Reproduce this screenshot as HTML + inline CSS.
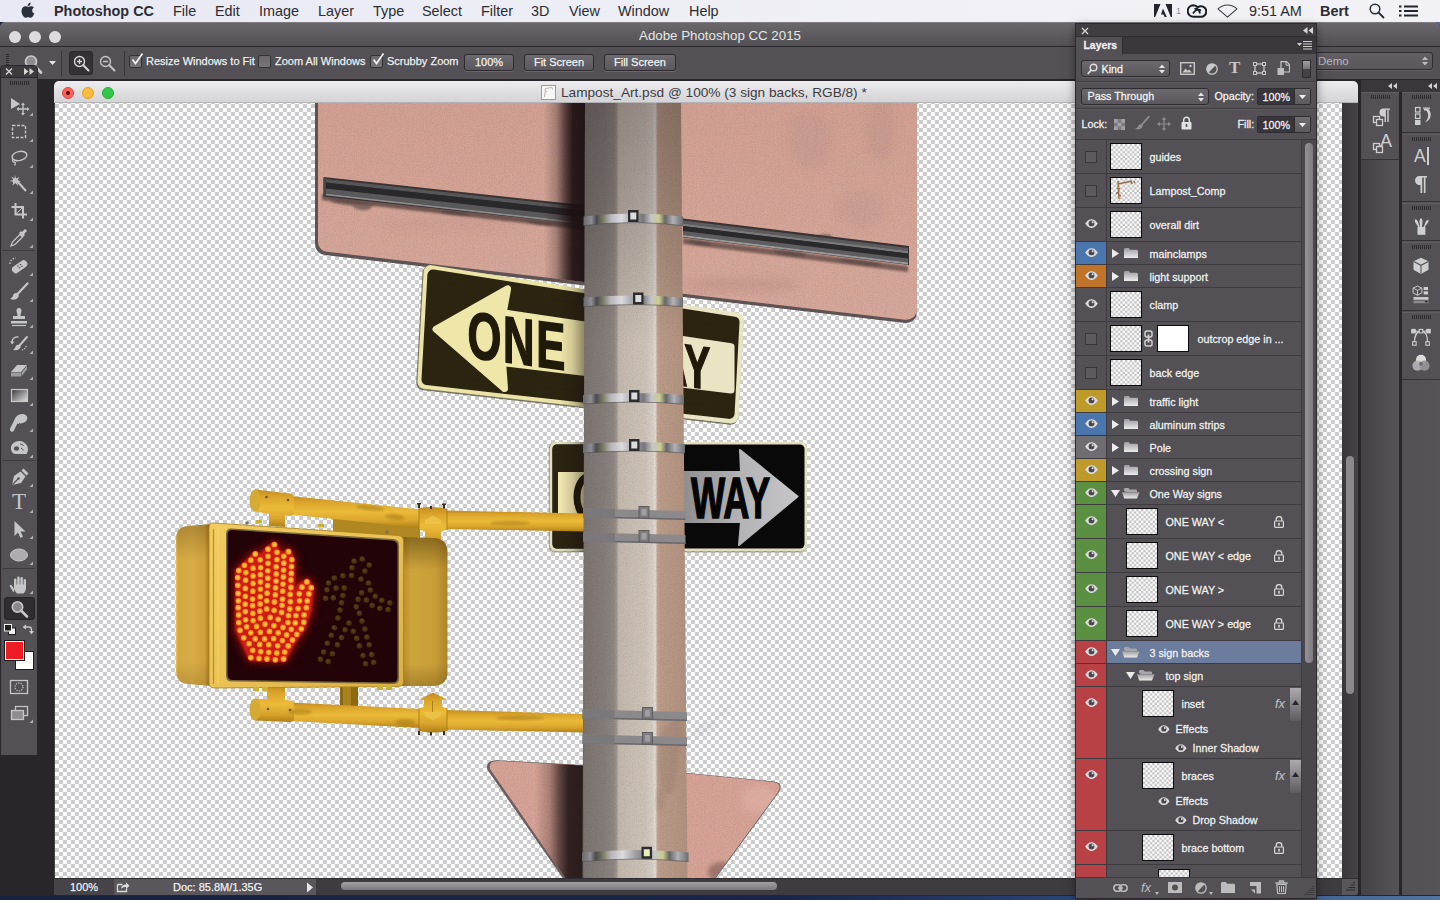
<!DOCTYPE html>
<html lang="en">
<head>
<meta charset="utf-8">
<title>Adobe Photoshop CC 2015</title>
<style>
html,body{margin:0;padding:0}
body{width:1440px;height:900px;overflow:hidden;position:relative;background:linear-gradient(90deg,#17223e 0%,#18264a 55%,#2c4a80 78%,#5373a6 100%);font-family:"Liberation Sans",Arial,sans-serif;font-size:11px;color:#f0f0f0;-webkit-font-smoothing:antialiased}
.abs{position:absolute}
#menubar{left:0;top:0;width:1440px;height:22px;background:linear-gradient(90deg,#e8e9f4,#f0f0f6 60%,#f2f2f6);color:#2c2c32;font-size:14.4px;line-height:22px}
#menubar span{position:absolute;top:0;white-space:nowrap}
#app{left:0;top:22px;width:1440px;height:873.500px;background:#28262a;border-radius:5px 5px 0 0;overflow:hidden}
#apptitle{left:0;top:0;width:1440px;height:24px;background:linear-gradient(#6a686c,#525054);border-top:1px solid #7d7b80;box-sizing:border-box;text-align:center;color:#e6e6e6;font-size:13.300px;line-height:25px}
#optbar{left:0;top:24px;width:1440px;height:33px;background:#535155;border-top:1px solid #2c2a2e;box-sizing:border-box}
.tl{position:absolute;width:12px;height:12px;border-radius:6px}
.btn{position:absolute;height:17px;border:1px solid #2e2c30;border-radius:3px;background:linear-gradient(#6d6b6f,#5a585c);box-sizing:border-box;text-align:center;line-height:15px;font-size:11px;color:#f2f2f2;box-shadow:0 1px 0 rgba(255,255,255,.12);-webkit-text-stroke:.25px rgba(242,242,242,.9)}
.cb{position:absolute;width:13px;height:13px;border:1px solid #343236;border-radius:2px;background:linear-gradient(#6a686c,#77757a);box-sizing:border-box}
.olabel{position:absolute;font-size:11px;line-height:14px;color:#f2f2f2;white-space:nowrap;-webkit-text-stroke:.25px rgba(242,242,242,.9)}
</style>
</head>
<body>
<div id="menubar" class="abs">
<svg class="abs" style="left:20px;top:2px" width="16" height="18" viewBox="0 0 16 18"><path fill="#2a2f3d" d="M11.2 4.3c-1.2 0-2 .7-2.9.7-.9 0-1.700-.7-2.800-.7C3.500 4.300 1.500 6 1.500 9.100c0 3 2.100 6.700 4 6.700.9 0 1.400-.6 2.600-.6 1.200 0 1.500.6 2.600.6 1.600 0 3.100-2.600 3.600-4.200-1.300-.5-2.100-1.700-2.100-3.100 0-1.300.7-2.300 1.700-2.900-.7-.9-1.700-1.300-2.700-1.300zM10.700.600c-.9.100-1.900.7-2.400 1.400-.5.600-.8 1.500-.7 2.300.9 0 1.900-.5 2.400-1.200.5-.7.800-1.600.7-2.500z"/></svg>
<span style="left:54px;font-weight:bold">Photoshop CC</span>
<span style="left:173px">File</span><span style="left:215px">Edit</span><span style="left:259px">Image</span><span style="left:318px">Layer</span><span style="left:373px">Type</span><span style="left:422px">Select</span><span style="left:481px">Filter</span><span style="left:531px">3D</span><span style="left:569px">View</span><span style="left:618px">Window</span><span style="left:689px">Help</span>
<svg class="abs" style="left:1154px;top:4px" width="18" height="14" viewBox="0 0 18 14"><path d="M0 0h6.500L1.200 13H0zM11.500 0H18v13h-1.200zM9 4.500l3.800 8.500H10.500L9.500 10.500H7z" fill="#23262e"/></svg>
<span style="left:1176px;font-size:9px;color:#8a8c96">1</span>
<svg class="abs" style="left:1187px;top:4px" width="20" height="14" viewBox="0 0 20 14"><path d="M6.500 1.200a5.800 5.800 0 000 11.600h7.500a5.300 5.300 0 000-10.600c-1.200 0-2.300.4-3.200 1.100A5.800 5.800 0 006.500 1.200z" fill="none" stroke="#1c1e26" stroke-width="2"/><path d="M6 9.500c2-3.500 5-4.800 8-3M7.500 5C10 4 12.500 6 13 9.500" fill="none" stroke="#1c1e26" stroke-width="1.800"/></svg>
<svg class="abs" style="left:1217px;top:4px" width="21" height="14" viewBox="0 0 21 14"><path d="M1 4.800C6.500-.2 14.500-.2 20 4.800L10.500 13.200z" fill="none" stroke="#3a3d48" stroke-width="1.100" stroke-linejoin="round"/></svg>
<svg class="abs" style="left:1369px;top:3px" width="16" height="16" viewBox="0 0 16 16"><circle cx="6" cy="6" r="4.800" fill="none" stroke="#2a2d38" stroke-width="1.500"/><path d="M9.500 9.500L14.500 14.500" stroke="#2a2d38" stroke-width="1.800" stroke-linecap="round"/></svg>
<svg class="abs" style="left:1399px;top:5px" width="19" height="12" viewBox="0 0 19 12"><path d="M0 1.500h2.500M5 1.500h14M0 6h2.500M5 6h14M0 10.500h2.500M5 10.500h14" stroke="#23262e" stroke-width="2"/></svg>
<span style="left:1249px">9:51 AM</span><span style="left:1320px;font-weight:bold">Bert</span>
</div>
<div id="app" class="abs">
<div id="apptitle" class="abs">Adobe Photoshop CC 2015
<i class="tl" style="left:9px;top:8px;background:#dddbdf"></i><i class="tl" style="left:29px;top:8px;background:#dddbdf"></i><i class="tl" style="left:49px;top:8px;background:#dddbdf"></i>
</div>
<div id="optbar" class="abs">
<div class="abs" style="left:6px;top:7px;width:3px;height:17px;background:repeating-linear-gradient(#2e2c30 0 1px,transparent 1px 2px)"></div>
<svg class="abs" style="left:22px;top:6px" width="22" height="22" viewBox="0 0 22 22"><circle cx="9" cy="8.500" r="5.500" fill="#8f8d91" stroke="#c9c9cb" stroke-width="1.700"/><path d="M13 13l6 6.500" stroke="#c9c9cb" stroke-width="2.800" stroke-linecap="round"/></svg>
<svg class="abs" style="left:49px;top:14px" width="7" height="4" viewBox="0 0 7 4"><path d="M0 0h7L3.500 4z" fill="#e4e4e4"/></svg>
<div class="abs" style="left:61px;top:4px;width:1px;height:25px;background:#3a383c"></div>
<div class="abs" style="left:69px;top:4px;width:24px;height:24px;background:#343236;border:1px solid #2a282c;border-radius:3px;box-sizing:border-box"></div>
<svg class="abs" style="left:73px;top:8px" width="17" height="17" viewBox="0 0 17 17"><circle cx="6.500" cy="6.500" r="5" fill="none" stroke="#d8d8da" stroke-width="1.400"/><path d="M10.300 10.300L15.500 15.500" stroke="#d8d8da" stroke-width="2" stroke-linecap="round"/><path d="M4 6.500h5M6.500 4v5" stroke="#d8d8da" stroke-width="1.300"/></svg>
<svg class="abs" style="left:99px;top:8px" width="17" height="17" viewBox="0 0 17 17"><circle cx="6.500" cy="6.500" r="5" fill="none" stroke="#c4c4c6" stroke-width="1.400"/><path d="M10.300 10.300L15.500 15.500" stroke="#c4c4c6" stroke-width="2" stroke-linecap="round"/><path d="M4 6.500h5" stroke="#c4c4c6" stroke-width="1.300"/></svg>
<div class="abs" style="left:124px;top:4px;width:1px;height:25px;background:#3a383c"></div>
<i class="cb" style="left:129px;top:8px"></i><svg class="abs" style="left:130px;top:5px" width="14" height="14" viewBox="0 0 14 14"><path d="M2.500 7.500L5.500 11.500L12.500 1.500" fill="none" stroke="#f2f2f2" stroke-width="1.700"/></svg><span class="olabel" style="left:146px;top:7px">Resize Windows to Fit</span>
<i class="cb" style="left:258px;top:8px"></i><span class="olabel" style="left:275px;top:7px">Zoom All Windows</span>
<i class="cb" style="left:370px;top:8px"></i><svg class="abs" style="left:371px;top:5px" width="14" height="14" viewBox="0 0 14 14"><path d="M2.500 7.500L5.500 11.500L12.500 1.500" fill="none" stroke="#f2f2f2" stroke-width="1.700"/></svg><span class="olabel" style="left:387px;top:7px">Scrubby Zoom</span>
<div class="btn" style="left:464px;top:7px;width:50px">100%</div>
<div class="btn" style="left:524px;top:7px;width:70px">Fit Screen</div>
<div class="btn" style="left:604px;top:7px;width:72px">Fill Screen</div>
</div>
<!-- document window -->
<div id="doc" class="abs" style="left:54px;top:59px;width:1304px;height:814px;border-radius:5px 5px 0 0;overflow:hidden;background:#434145">
<div class="abs" style="left:0;top:0;width:1304px;height:22px;background:linear-gradient(#ececee,#d4d3d6);border-bottom:1px solid #b4b3b6;box-sizing:border-box;font-size:13px;line-height:23px;color:#3c3c3e">
<i class="tl" style="left:8px;top:6px;background:#fc615d;border:0.5px solid #e0443e;box-sizing:border-box"></i><i class="abs" style="left:12px;top:10px;width:4px;height:4px;border-radius:2px;background:#5c0002"></i>
<i class="tl" style="left:28px;top:6px;background:#fdbc40;border:0.5px solid #dea123;box-sizing:border-box"></i>
<i class="tl" style="left:48px;top:6px;background:#34c84a;border:0.5px solid #27aa35;box-sizing:border-box"></i>
<svg class="abs" style="left:487px;top:4px" width="15" height="15" viewBox="0 0 15 15"><rect x=".5" y=".5" width="14" height="14" fill="#f6f6f6" stroke="#9a9a9c"/><path d="M3.500 12L4.500 3.500L11 2.500M4.500 6l1.500 1M11 2.500l.5 2" stroke="#c0b0a6" stroke-width="1" fill="none"/></svg><span class="abs" style="left:507px;top:0;font-size:13.650px;white-space:nowrap">Lampost_Art.psd @ 100% (3 sign backs, RGB/8) *</span>
</div>
<div id="canvas" class="abs" style="left:1px;top:22px;width:1287px;height:775px;background:repeating-conic-gradient(#fff 0% 25%,#ccccce 0% 50%) 0 1px/8px 8px;overflow:hidden">
<svg class="abs" style="left:0;top:0" width="1287" height="775" viewBox="55 103 1287 775">
<defs>
<filter id="b2" x="-20%" y="-20%" width="140%" height="140%"><feGaussianBlur stdDeviation="2"/></filter>
<filter id="b1" x="-20%" y="-50%" width="140%" height="200%"><feGaussianBlur stdDeviation="1.2"/></filter>
<filter id="b4" x="-30%" y="-30%" width="160%" height="160%"><feGaussianBlur stdDeviation="4"/></filter>
<filter id="b6" x="-30%" y="-30%" width="160%" height="160%"><feGaussianBlur stdDeviation="7"/></filter>
<filter id="grain" x="0" y="0" width="100%" height="100%"><feTurbulence type="fractalNoise" baseFrequency=".9" numOctaves="2" seed="3" result="n"/><feColorMatrix in="n" type="matrix" values="0 0 0 0 0  0 0 0 0 0  0 0 0 0 0  .9 .9 .9 0 -1.15"/><feComposite in2="SourceGraphic" operator="in"/></filter>
<linearGradient id="pole" x1="0" x2="1" y1="0" y2="0"><stop offset="0" stop-color="#6a6360"/><stop offset=".02" stop-color="#7c7571"/><stop offset=".2" stop-color="#857d79"/><stop offset=".3" stop-color="#8f8783"/><stop offset=".325" stop-color="#a0978f"/><stop offset=".345" stop-color="#c5b9ae"/><stop offset=".6" stop-color="#cfc4b9"/><stop offset=".67" stop-color="#d8cfc6"/><stop offset=".692" stop-color="#e4ded8"/><stop offset=".715" stop-color="#c0a490"/><stop offset=".74" stop-color="#bb9c88"/><stop offset="1" stop-color="#b19280"/></linearGradient>
<linearGradient id="poletop" x1="0" x2="0" y1="0" y2="1"><stop offset="0" stop-color="#1a1214" stop-opacity=".3"/><stop offset=".6" stop-color="#1a1214" stop-opacity=".14"/><stop offset="1" stop-color="#1a1214" stop-opacity="0"/></linearGradient>
<linearGradient id="pshadow2" x1="0" x2="1" y1="0" y2="0"><stop offset="0" stop-color="#1a0e10" stop-opacity="0"/><stop offset=".5" stop-color="#1a0e10" stop-opacity=".15"/><stop offset="1" stop-color="#1a0e10" stop-opacity=".5"/></linearGradient>
<linearGradient id="pshadow" x1="0" x2="1" y1="0" y2="0"><stop offset="0" stop-color="#1a0e10" stop-opacity="0"/><stop offset=".3" stop-color="#1a0e10" stop-opacity=".25"/><stop offset=".5" stop-color="#1a0e10" stop-opacity=".66"/><stop offset=".68" stop-color="#1a0e10" stop-opacity=".92"/><stop offset="1" stop-color="#1a0e10" stop-opacity=".96"/></linearGradient>
<linearGradient id="pink" x1="0" x2="0" y1="0" y2="1"><stop offset="0" stop-color="#d2a193"/><stop offset="1" stop-color="#d8a99c"/></linearGradient>
<linearGradient id="band" x1="0" x2="1" y1="0" y2="0"><stop offset="0" stop-color="#6a6a6e"/><stop offset=".08" stop-color="#8e8e92"/><stop offset=".13" stop-color="#4a4b4f"/><stop offset=".2" stop-color="#7e7e64"/><stop offset=".27" stop-color="#b5b5b9"/><stop offset=".38" stop-color="#dcdce0"/><stop offset=".5" stop-color="#a2a2a6"/><stop offset=".6" stop-color="#77777b"/><stop offset=".68" stop-color="#c6c6ca"/><stop offset=".76" stop-color="#cbcb8c"/><stop offset=".82" stop-color="#66666a"/><stop offset=".9" stop-color="#b2b2b6"/><stop offset="1" stop-color="#6c6c70"/></linearGradient>
<linearGradient id="gold" x1="0" x2="0" y1="0" y2="1"><stop offset="0" stop-color="#c48c1c"/><stop offset=".2" stop-color="#dba52c"/><stop offset=".5" stop-color="#ebbb38"/><stop offset=".78" stop-color="#d9a42c"/><stop offset="1" stop-color="#b07e16"/></linearGradient>
<linearGradient id="goldh" x1="0" x2="1" y1="0" y2="0"><stop offset="0" stop-color="#e8c050"/><stop offset=".07" stop-color="#d4a742"/><stop offset=".45" stop-color="#d8ac47"/><stop offset=".8" stop-color="#cfa03c"/><stop offset=".92" stop-color="#a87a22"/><stop offset="1" stop-color="#5e3e0c"/></linearGradient>
<linearGradient id="goldr" x1="0" x2="1" y1="0" y2="0"><stop offset="0" stop-color="#b88c2a"/><stop offset=".2" stop-color="#cda43c"/><stop offset=".7" stop-color="#c99e38"/><stop offset="1" stop-color="#b0862a"/></linearGradient>
<linearGradient id="frame" x1="0" x2="1" y1="0" y2="1"><stop offset="0" stop-color="#f2cc60"/><stop offset=".5" stop-color="#eac256"/><stop offset="1" stop-color="#dcae40"/></linearGradient>
<linearGradient id="topsh" x1="0" x2="0" y1="0" y2="1"><stop offset="0" stop-color="#3a2600" stop-opacity=".45"/><stop offset=".22" stop-color="#3a2600" stop-opacity="0"/><stop offset=".85" stop-color="#3a2600" stop-opacity="0"/><stop offset="1" stop-color="#3a2600" stop-opacity=".25"/></linearGradient>
<linearGradient id="silver" x1="0" x2="1" y1="0" y2="0"><stop offset="0" stop-color="#8e8e90"/><stop offset=".5" stop-color="#b4b4b6"/><stop offset="1" stop-color="#c6c6c8"/></linearGradient>
<radialGradient id="glow" cx=".5" cy=".5" r=".5"><stop offset="0" stop-color="#ff2a10" stop-opacity=".95"/><stop offset=".7" stop-color="#e01808" stop-opacity=".8"/><stop offset="1" stop-color="#a00c04" stop-opacity="0"/></radialGradient>
<linearGradient id="railL" gradientUnits="userSpaceOnUse" x1="0" y1="0" x2="-1.85" y2="16"><stop offset="0" stop-color="#9a9a9c"/><stop offset=".12" stop-color="#2b2b2d"/><stop offset=".42" stop-color="#252527"/><stop offset=".5" stop-color="#6a6a6c"/><stop offset=".82" stop-color="#707072"/><stop offset=".9" stop-color="#b4b4b6"/><stop offset="1" stop-color="#7d7d7f"/></linearGradient>
<clipPath id="topsign"><path d="M318,103 L318,241 Q318,250.500 327,251.800 L903,319.500 Q917,321 917,307 L917,103 Z"/></clipPath>
<clipPath id="cv"><rect x="55" y="103" width="1287" height="775"/></clipPath>
</defs>
<g clip-path="url(#cv)">
<path d="M315,103 L315,243 Q315,253.500 325,255 L903,322.800 Q913,324 916.500,316 L916.500,103 Z" fill="#5e5354"/>
<path d="M318,103 L318,241 Q318,250.500 327,251.800 L903,319.500 Q917,321 917,307 L917,103 Z" fill="url(#pink)"/>
<g clip-path="url(#topsign)">
<g filter="url(#b4)" opacity=".55"><ellipse cx="640" cy="125" rx="18" ry="10" fill="#e2b1a4"/><ellipse cx="810" cy="140" rx="22" ry="28" fill="#c99a90"/><ellipse cx="860" cy="210" rx="25" ry="20" fill="#cb9c92"/><ellipse cx="740" cy="285" rx="60" ry="8" fill="#c49489"/><ellipse cx="450" cy="225" rx="70" ry="7" fill="#cc9c90"/><ellipse cx="880" cy="130" rx="14" ry="30" fill="#c6978d"/></g>
<rect x="315" y="103" width="603" height="225" fill="#fff" filter="url(#grain)" opacity=".1"/>
<polygon points="322,194 585,223 585,230 322,200" fill="#2e2020" opacity=".6" filter="url(#b1)"/>
<g transform="translate(325,178)"><polygon points="-1.500,-1 260,27.300 260,46.500 -1.500,18.500" fill="#3a3234"/><polygon points="0,1 260,29.300 260,33 0,4.500" fill="#565658"/><polygon points="0,4.500 260,33 260,39.500 0,10.500" fill="#29292b"/><polygon points="0,10.500 260,39.500 260,44.500 0,15.500" fill="#59595b"/><polygon points="0,15.500 260,44.500 260,46.500 0,17.300" fill="#8c8c8e"/><rect x="-1.500" y="0" width="2.500" height="17" fill="#47474a"/></g>
<g filter="url(#b1)" opacity=".55" fill="#4a3a3a"><ellipse cx="352" cy="203.500" rx="22" ry="2.600" transform="rotate(6.500 352 203.500)"/><ellipse cx="362" cy="207" rx="9" ry="3" transform="rotate(6.500 362 207)"/><ellipse cx="455" cy="213" rx="14" ry="1.800" transform="rotate(6.500 455 213)"/><ellipse cx="540" cy="223" rx="12" ry="1.800" transform="rotate(6.500 540 223)"/></g>
<polygon points="683,238 908,266 908,272 683,244" fill="#2e2020" opacity=".55" filter="url(#b1)"/>
<g transform="translate(683,219.500)"><polygon points="0,-1 226,26.500 226,45.500 0,18" fill="#3a3234"/><polygon points="0,1 225,28.500 225,31.500 0,4" fill="#5c5c5e"/><polygon points="0,4 225,31.500 225,34 0,6.500" fill="#7a7a7c"/><polygon points="0,6.500 225,34 225,39 0,11.500" fill="#2a2a2c"/><polygon points="0,11.500 225,39 225,43 0,15.500" fill="#5e5e60"/><polygon points="0,15.500 225,43 225,45 0,17.500" fill="#9a9a9c"/></g>
<g filter="url(#b1)" opacity=".5" fill="#4a3a3a"><ellipse cx="790" cy="253" rx="16" ry="2.500" transform="rotate(7 790 253)"/><ellipse cx="825" cy="236" rx="7" ry="2"/><ellipse cx="700" cy="243" rx="12" ry="2" transform="rotate(7 700 243)"/><ellipse cx="860" cy="262" rx="22" ry="2" transform="rotate(7 860 262)"/></g>
<rect x="544" y="103" width="42" height="230" fill="url(#pshadow)"/>
</g>
<path d="M487.500,770 Q484.500,759.300 499,760.300 L583,765 L688,773 L774,781.500 Q784,783 779,792 L713,882 L565.500,882 Z" fill="#6a5e5e"/>
<path d="M490,769 Q487.500,760.300 500,761 L583,765.500 L688,773.500 L773,782 Q783,783.500 778,792 L712,882 L568,882 Z" fill="#d7a497"/>
<clipPath id="tric"><path d="M490,769 Q487.500,760.300 500,761 L583,765.500 L688,773.500 L773,782 Q783,783.500 778,792 L712,882 L568,882 Z"/></clipPath>
<g clip-path="url(#tric)"><rect x="480" y="755" width="310" height="130" fill="#fff" filter="url(#grain)" opacity=".1"/><rect x="535" y="755" width="49" height="130" fill="url(#pshadow)" opacity=".95"/><ellipse cx="722" cy="872" rx="14" ry="10" fill="#6a4a44" opacity=".5" filter="url(#b2)"/><ellipse cx="760" cy="800" rx="20" ry="14" fill="#e4b6aa" opacity=".5" filter="url(#b4)"/></g>
<polygon points="430.6,272.1 736.7,319.9 731.4,416.2 424.4,381.8" fill="#4a4630" opacity=".7" transform="translate(-.7,1)" stroke="#4a4630" stroke-width="15" stroke-linejoin="round"/>
<polygon points="430.6,272.1 736.7,319.9 731.4,416.2 424.4,381.8" fill="#ece3a6" stroke="#ece3a6" stroke-width="14" stroke-linejoin="round"/>
<polygon points="432.9,275.0 734.0,322.1 729.1,413.4 427.0,379.6" fill="#2a2410" stroke="#2a2410" stroke-width="11" stroke-linejoin="round"/>
<clipPath id="ow1"><polygon points="424.0,264.0 744.0,314.0 738.0,424.0 417.0,388.0"/></clipPath>
<polygon points="436,329.200 507.600,288.800 503.200,312.800 731,346.600 731,390 502.600,362.700 504.500,388.500" fill="#efe6a9" stroke="#efe6a9" stroke-width="7" stroke-linejoin="round"/>
<g font-family="'Liberation Sans',Arial,sans-serif" font-weight="bold" fill="#1f1a0a" stroke="#1f1a0a" stroke-width="1.600">
<text transform="matrix(.662 .089 0 1 467.500 357)" font-size="65.800" letter-spacing="2.500">ONE</text>
<text transform="matrix(.64 .085 0 1 625 378)" font-size="60" letter-spacing="1">WAY</text>
</g>
<clipPath id="ow1r"><rect x="683" y="290" width="80" height="150"/></clipPath>
<g clip-path="url(#ow1r)"><polygon points="430.6,272.1 736.7,319.9 731.4,416.2 424.4,381.8" fill="none" stroke="#e9e4c4" stroke-width="14" stroke-linejoin="round"/><polygon points="432.9,275.0 734.0,322.1 729.1,413.4 427.0,379.6" fill="#2a2410" stroke="#2a2410" stroke-width="11" stroke-linejoin="round"/><polygon points="436,329.200 507.600,288.800 503.200,312.800 731,346.600 731,390 502.600,362.700 504.500,388.500" fill="#e9e4c4" stroke="#e9e4c4" stroke-width="7" stroke-linejoin="round"/><text transform="matrix(.64 .085 0 1 625 378)" font-size="60" letter-spacing="1" font-family="'Liberation Sans',Arial,sans-serif" font-weight="bold" fill="#1f1a0a" stroke="#1f1a0a" stroke-width="1.600">WAY</text></g>
<g clip-path="url(#ow1)"><rect x="560" y="260" width="26" height="160" fill="url(#pshadow2)"/></g>
<rect x="549.500" y="441.500" width="257.500" height="110" rx="6" fill="#6d6848" opacity=".5" transform="translate(-.8,1)"/>
<rect x="550" y="442" width="257" height="109" rx="6" fill="#e3dfc0"/>
<rect x="552.500" y="444.500" width="252" height="104" rx="4.500" fill="#090909"/>
<path d="M557,444.500 H640 V548.500 H557 Q552.500,548.500 552.500,544 V449 Q552.500,444.500 557,444.500Z" fill="#2a2410"/>
<rect x="558" y="472" width="60" height="50" fill="#efe6b0"/>
<ellipse cx="590" cy="497" rx="13" ry="21" fill="none" stroke="#1f1a0a" stroke-width="7"/>
<polygon points="684,472 741,472 740,450 797.500,496.500 739,545 741,522 684,522" fill="url(#silver)" stroke="url(#silver)" stroke-width="2" stroke-linejoin="round"/>
<text transform="matrix(.635 0 0 1 691 518)" font-family="'Liberation Sans',Arial,sans-serif" font-weight="bold" font-size="57" fill="#050505" stroke="#050505" stroke-width="1.500">WAY</text>
<rect x="560" y="442" width="26" height="110" fill="url(#pshadow2)"/>
<path d="M333,520 Q334,514 342,514 L420,520 L420,540 L333,532Z" fill="#b08822"/>
<g>
<polygon points="290,496 421,509.500 421,528 290,514.500" fill="url(#gold)"/>
<polygon points="446,510.500 584,513.500 584,531.500 446,529" fill="url(#gold)"/>
<path d="M255,489.500 L290,493.500 Q294,494 294,498 L294,512 Q294,516 290,516 L285,515.500 L285,527 L269,526 L269,514 L255,511.500 Z" fill="url(#gold)"/>
<ellipse cx="255" cy="500.500" rx="5.500" ry="11" fill="#d5ab35"/>
<circle cx="266.500" cy="497" r="1.300" fill="#6e5210"/><circle cx="288" cy="500" r="1.300" fill="#6e5210"/>
<path d="M419,508 Q433,505.500 447,509 L447,530 L441,531 L441,543 Q433,547 425,543 L425,531 L419,530Z" fill="url(#gold)"/>
<path d="M425,520 L433,515.500 L441,520 L441,524 L425,524Z" fill="#edc64e" opacity=".8"/>
<path d="M419,508 L419,530M447,509 L447,530" stroke="#9a7614" stroke-width=".8"/>
<g fill="#3a3020"><rect x="418" y="503.500" width="2" height="4.500"/><rect x="430" y="506" width="2" height="3"/><rect x="443" y="504" width="2" height="4.500"/><rect x="417" y="503" width="4" height="1.500"/><rect x="442" y="503.500" width="4" height="1.500"/></g>
</g>
<g>
<rect x="340" y="686" width="18" height="20" fill="#8d6a12"/><rect x="343" y="686" width="8" height="20" fill="#a98220"/>
<polygon points="290,702.500 421,709 421,728 290,721" fill="url(#gold)"/>
<polygon points="446,710 584,714 584,732.500 446,729.500" fill="url(#gold)"/>
<path d="M267,686 L285,686 L285,700 L290,700.500 Q294,701 294,705 L294,718 Q294,722 290,722 L255,720.500 L255,698.500 L267,699.500Z" fill="url(#gold)"/>
<ellipse cx="255" cy="709.500" rx="5.500" ry="11" fill="#d5ab35"/>
<circle cx="268" cy="709" r="1.300" fill="#6e5210"/><circle cx="290" cy="710" r="1.300" fill="#6e5210"/>
<path d="M419,708 L424,707 L424,700 L419,699.500 L433,692.500 L447,699.500 L442,700 L442,707 L447,708 L447,731 Q433,734 419,731Z" fill="url(#gold)"/>
<path d="M425,716 L433,720.500 L441,716 L441,712 L425,712Z" fill="#edc64e" opacity=".7"/>
<path d="M419,708 L419,731M447,708 L447,731M432.500,701V712" stroke="#9a7614" stroke-width=".8"/>
<g fill="#3a3020"><rect x="418" y="731" width="2" height="4"/><rect x="430" y="732" width="2" height="3.500"/><rect x="443" y="731" width="2" height="4"/></g>
</g>
<g opacity=".35" fill="#8a6408" filter="url(#b1)"><ellipse cx="370" cy="508" rx="14" ry="2.500" transform="rotate(6 370 508)"/><ellipse cx="395" cy="517" rx="10" ry="3" transform="rotate(6 395 517)"/><ellipse cx="510" cy="523" rx="20" ry="2.500"/><ellipse cx="300" cy="712" rx="12" ry="3"/><ellipse cx="520" cy="718" rx="24" ry="2.500"/><ellipse cx="405" cy="722" rx="10" ry="3"/></g>
<polygon points="585,103 681,103 687.500,878 582.500,878" fill="url(#pole)"/>
<clipPath id="polec"><polygon points="585,103 681,103 687.500,878 582.500,878"/></clipPath>
<g clip-path="url(#polec)"><rect x="580" y="103" width="110" height="775" fill="#fff" filter="url(#grain)" opacity=".1"/>
<rect x="580" y="103" width="110" height="240" fill="url(#poletop)"/>
<g filter="url(#b2)" fill="#6a5a52" opacity=".16"><ellipse cx="668" cy="760" rx="10" ry="35"/><ellipse cx="676" cy="735" rx="7" ry="18"/><ellipse cx="660" cy="800" rx="4" ry="12"/></g>
</g>
<g filter="url(#b2)" fill="#8a8080" opacity=".12"><ellipse cx="705" cy="728" rx="14" ry="6" transform="rotate(-30 705 728)"/><ellipse cx="725" cy="712" rx="8" ry="3" transform="rotate(-30 725 712)"/></g>
<path d="M583.5,216.4 Q633.25,210.4 683,216.4 L683,225.6 Q633.25,219.6 583.5,225.6Z" fill="url(#band)"/>
<path d="M583.5,225.6 Q633.25,219.6 683,225.6" fill="none" stroke="#4a4a4c" stroke-width=".8" opacity=".7"/>
<rect x="628" y="210.0" width="10.500" height="12" fill="#2c2c2e"/><rect x="630.3" y="212.5" width="6" height="7" fill="#dcdcde"/>
<path d="M583.5,297.4 Q633.25,293.4 683,297.4 L683,306.6 Q633.25,302.6 583.5,306.6Z" fill="url(#band)"/>
<path d="M583.5,306.6 Q633.25,302.6 683,306.6" fill="none" stroke="#4a4a4c" stroke-width=".8" opacity=".7"/>
<rect x="633" y="292.5" width="10.500" height="12" fill="#2c2c2e"/><rect x="635.3" y="295.0" width="6" height="7" fill="#dcdcde"/>
<path d="M583,394.9 Q633.5,390.9 684,394.9 L684,404.1 Q633.5,400.1 583,404.1Z" fill="url(#band)"/>
<path d="M583,404.1 Q633.5,400.1 684,404.1" fill="none" stroke="#4a4a4c" stroke-width=".8" opacity=".7"/>
<rect x="629" y="390.0" width="10.500" height="12" fill="#2c2c2e"/><rect x="631.3" y="392.5" width="6" height="7" fill="#dcdcde"/>
<path d="M583,443.9 Q634.0,439.9 685,443.9 L685,453.1 Q634.0,449.1 583,453.1Z" fill="url(#band)"/>
<path d="M583,453.1 Q634.0,449.1 685,453.1" fill="none" stroke="#4a4a4c" stroke-width=".8" opacity=".7"/>
<rect x="629" y="439.0" width="10.500" height="12" fill="#2c2c2e"/><rect x="631.3" y="441.5" width="6" height="7" fill="#dcdcde"/>
<path d="M582,852.4 Q635.25,847.4 688.5,852.4 L688.5,861.6 Q635.25,856.6 582,861.6Z" fill="url(#band)"/>
<path d="M582,861.6 Q635.25,856.6 688.5,861.6" fill="none" stroke="#4a4a4c" stroke-width=".8" opacity=".7"/>
<rect x="641.5" y="846.75" width="10.500" height="12" fill="#2c2c2e"/><rect x="643.8" y="849.25" width="6" height="7" fill="#e9efb8"/>
<polygon points="583,508.5 685.5,511.0 685.5,520.0 583,517.5" fill="#8b898b"/>
<polygon points="583,516.0 685.5,518.5 685.5,520.0 583,517.5" fill="#6a686a"/>
<polygon points="583,508.5 615,509.3 615,518.3 583,517.5" fill="#7a787a"/>
<rect x="639" y="506.5" width="10" height="11.500" fill="#7e7c7e" stroke="#5e5c5e" stroke-width="1"/><rect x="641.5" y="509" width="5" height="6.500" fill="#a09ea0"/>
<polygon points="583,532.5 685.5,535.0 685.5,544.0 583,541.5" fill="#8b898b"/>
<polygon points="583,540.0 685.5,542.5 685.5,544.0 583,541.5" fill="#6a686a"/>
<polygon points="583,532.5 615,533.3 615,542.3 583,541.5" fill="#7a787a"/>
<rect x="639" y="530.5" width="10" height="11.500" fill="#7e7c7e" stroke="#5e5c5e" stroke-width="1"/><rect x="641.5" y="533" width="5" height="6.500" fill="#a09ea0"/>
<polygon points="582.5,709.5 687,712.0 687,721.0 582.5,718.5" fill="#8b898b"/>
<polygon points="582.5,717.0 687,719.5 687,721.0 582.5,718.5" fill="#6a686a"/>
<polygon points="582.5,709.5 614.5,710.3 614.5,719.3 582.5,718.5" fill="#7a787a"/>
<rect x="642.5" y="707.5" width="10" height="11.500" fill="#7e7c7e" stroke="#5e5c5e" stroke-width="1"/><rect x="645.0" y="710" width="5" height="6.500" fill="#a09ea0"/>
<polygon points="582.5,734.5 687,737.0 687,746.0 582.5,743.5" fill="#8b898b"/>
<polygon points="582.5,742.0 687,744.5 687,746.0 582.5,743.5" fill="#6a686a"/>
<polygon points="582.5,734.5 614.5,735.3 614.5,744.3 582.5,743.5" fill="#7a787a"/>
<rect x="642.5" y="732.5" width="10" height="11.500" fill="#7e7c7e" stroke="#5e5c5e" stroke-width="1"/><rect x="645.0" y="735" width="5" height="6.500" fill="#a09ea0"/>
<g>
<path d="M188,526 L212,524 L212,686 L188,684 Q176,683 176,671 L176,539 Q176,527 188,526Z" fill="url(#goldh)"/>
<path d="M402,537 L434,538 Q447.500,539 447.500,552 L447.500,672 Q447.500,685 434,686 L402,686Z" fill="url(#goldr)"/>
<path d="M402,537 L434,538 Q447.500,539 447.500,552 L447.500,672 Q447.500,685 434,686 L402,686Z" fill="url(#topsh)"/>
<path d="M188,526 L212,524 L212,686 L188,684 Q176,683 176,671 L176,539 Q176,527 188,526Z" fill="url(#topsh)" opacity=".6"/>
<path d="M209,527 Q209,522.500 214,523 L398,535.500 Q403.500,536 403.500,541 L403.500,682 Q403.500,686.500 398,686.500 L214,688 Q209,688 209,683Z" fill="url(#frame)"/>
<path d="M213.500,529 L213.500,684" stroke="#b8901e" stroke-width="1.200" fill="none"/><path d="M218,527 L218,685" stroke="#f3d462" stroke-width="1" fill="none" opacity=".8"/>
<path d="M209,527 Q209,522.500 214,523 L398,535.500 Q403.500,536 403.500,541 L403.500,682 Q403.500,686.500 398,686.500 L214,688 Q209,688 209,683Z" fill="none" stroke="#a8821a" stroke-width=".8"/>
<path d="M226,534 Q226,528 232,528.500 L393,539 Q399,539.500 399,545 L399,679 Q399,684 393,684 L232,681.500 Q226,681.500 226,676Z" fill="#7a6a3a"/>
<path d="M227.500,535 Q227.500,529.500 233,530 L392,540.500 Q397.500,541 397.500,546 L397.500,678 Q397.500,682.500 392,682.500 L233,680 Q227.500,680 227.500,675Z" fill="#220308"/>
<g fill="#c9b23a"><rect x="253" y="687" width="6" height="4"/><rect x="262" y="687" width="6" height="4"/><rect x="377" y="686" width="6" height="4"/><rect x="386" y="686" width="6" height="4"/><rect x="256" y="520" width="6" height="3.500"/><rect x="318" y="524" width="6" height="3.500"/></g>
<g fill="#777060"><circle cx="247" cy="523" r="1.800"/><circle cx="387" cy="532" r="1.800"/></g>
</g>
<polygon points="238.0,571.0 238.0,630.0 251.0,658.0 284.0,659.0 294.0,640.0 303.0,628.0 309.0,610.0 311.5,588.0 307.0,581.5 300.0,586.0 297.0,594.0 292.0,596.0 292.0,560.0 288.5,551.5 283.0,556.0 277.0,551.0 274.5,544.5 268.0,549.0 261.0,557.0 255.5,554.0 250.0,560.0 244.5,565.0" fill="#c81410" stroke="#c81410" stroke-width="9" stroke-linejoin="round" filter="url(#b4)" opacity=".6"/>
<polygon points="238.0,571.0 238.0,630.0 251.0,658.0 284.0,659.0 294.0,640.0 303.0,628.0 309.0,610.0 311.5,588.0 307.0,581.5 300.0,586.0 297.0,594.0 292.0,596.0 292.0,560.0 288.5,551.5 283.0,556.0 277.0,551.0 274.5,544.5 268.0,549.0 261.0,557.0 255.5,554.0 250.0,560.0 244.5,565.0" fill="#cc1a12" stroke="#cc1a12" stroke-width="5.500" stroke-linejoin="round" filter="url(#b1)"/>
<path d="M274.4,544.6h0M268.0,549.2h0M255.3,554.0h0M277.0,552.3h0M288.5,551.7h0M268.0,556.3h0M283.8,556.3h0M250.9,560.2h0M260.2,559.8h0M277.0,559.6h0M291.8,559.6h0M268.0,563.3h0M283.8,563.2h0M244.5,565.3h0M253.1,568.2h0M260.7,567.6h0M276.2,566.8h0M291.5,566.6h0M238.8,570.6h0M267.8,570.8h0M283.6,570.1h0M245.9,572.6h0M260.4,574.7h0M276.2,574.0h0M291.3,573.4h0M237.7,577.6h0M253.1,576.0h0M267.8,578.2h0M283.4,577.0h0M245.6,580.2h0M260.4,582.0h0M276.1,581.1h0M290.9,580.0h0M237.9,585.3h0M253.1,583.5h0M267.6,585.7h0M283.0,584.1h0M306.9,581.9h0M245.4,588.5h0M260.4,589.1h0M275.6,587.9h0M290.9,587.5h0M302.0,587.2h0M311.2,587.7h0M238.1,593.4h0M252.9,591.2h0M267.1,593.2h0M282.7,591.2h0M299.3,593.8h0M308.9,593.9h0M245.4,596.3h0M260.2,596.7h0M275.3,594.9h0M290.2,594.5h0M238.4,600.8h0M252.6,599.1h0M266.7,600.8h0M282.5,599.1h0M290.4,601.7h0M299.6,600.8h0M307.2,600.9h0M245.2,604.2h0M260.2,604.0h0M274.4,602.0h0M282.1,605.3h0M238.2,607.7h0M252.6,605.7h0M266.7,608.9h0M289.8,609.0h0M298.1,608.6h0M306.3,607.7h0M245.4,611.6h0M259.9,611.2h0M274.2,610.3h0M281.6,612.5h0M238.7,615.0h0M252.9,613.4h0M270.2,617.4h0M288.5,615.6h0M295.9,615.6h0M304.1,614.9h0M245.6,619.8h0M260.4,618.2h0M278.2,619.3h0M288.0,622.6h0M295.3,622.9h0M303.7,622.2h0M238.8,622.6h0M253.1,620.6h0M265.0,624.2h0M273.9,625.7h0M246.7,626.8h0M256.6,626.5h0M283.0,627.5h0M291.3,629.3h0M301.2,628.8h0M240.1,630.3h0M250.8,632.8h0M260.4,632.3h0M269.5,631.4h0M278.2,632.8h0M286.6,634.9h0M296.8,634.3h0M243.8,637.8h0M255.2,638.9h0M264.6,638.9h0M273.7,638.7h0M282.4,640.6h0M292.5,640.0h0M249.1,643.7h0M259.7,644.4h0M268.7,644.7h0M277.7,645.8h0M288.2,645.9h0M252.7,650.3h0M260.8,651.6h0M268.7,652.3h0M276.8,653.0h0M284.7,652.1h0M250.8,657.6h0M259.0,658.5h0M266.9,659.0h0M275.3,659.8h0M283.6,659.0h0" stroke="#ff861a" stroke-width="5.800" stroke-linecap="round" fill="none"/>
<path d="M274.4,544.6h0M268.0,549.2h0M255.3,554.0h0M277.0,552.3h0M288.5,551.7h0M268.0,556.3h0M283.8,556.3h0M250.9,560.2h0M260.2,559.8h0M277.0,559.6h0M291.8,559.6h0M268.0,563.3h0M283.8,563.2h0M244.5,565.3h0M253.1,568.2h0M260.7,567.6h0M276.2,566.8h0M291.5,566.6h0M238.8,570.6h0M267.8,570.8h0M283.6,570.1h0M245.9,572.6h0M260.4,574.7h0M276.2,574.0h0M291.3,573.4h0M237.7,577.6h0M253.1,576.0h0M267.8,578.2h0M283.4,577.0h0M245.6,580.2h0M260.4,582.0h0M276.1,581.1h0M290.9,580.0h0M237.9,585.3h0M253.1,583.5h0M267.6,585.7h0M283.0,584.1h0M306.9,581.9h0M245.4,588.5h0M260.4,589.1h0M275.6,587.9h0M290.9,587.5h0M302.0,587.2h0M311.2,587.7h0M238.1,593.4h0M252.9,591.2h0M267.1,593.2h0M282.7,591.2h0M299.3,593.8h0M308.9,593.9h0M245.4,596.3h0M260.2,596.7h0M275.3,594.9h0M290.2,594.5h0M238.4,600.8h0M252.6,599.1h0M266.7,600.8h0M282.5,599.1h0M290.4,601.7h0M299.6,600.8h0M307.2,600.9h0M245.2,604.2h0M260.2,604.0h0M274.4,602.0h0M282.1,605.3h0M238.2,607.7h0M252.6,605.7h0M266.7,608.9h0M289.8,609.0h0M298.1,608.6h0M306.3,607.7h0M245.4,611.6h0M259.9,611.2h0M274.2,610.3h0M281.6,612.5h0M238.7,615.0h0M252.9,613.4h0M270.2,617.4h0M288.5,615.6h0M295.9,615.6h0M304.1,614.9h0M245.6,619.8h0M260.4,618.2h0M278.2,619.3h0M288.0,622.6h0M295.3,622.9h0M303.7,622.2h0M238.8,622.6h0M253.1,620.6h0M265.0,624.2h0M273.9,625.7h0M246.7,626.8h0M256.6,626.5h0M283.0,627.5h0M291.3,629.3h0M301.2,628.8h0M240.1,630.3h0M250.8,632.8h0M260.4,632.3h0M269.5,631.4h0M278.2,632.8h0M286.6,634.9h0M296.8,634.3h0M243.8,637.8h0M255.2,638.9h0M264.6,638.9h0M273.7,638.7h0M282.4,640.6h0M292.5,640.0h0M249.1,643.7h0M259.7,644.4h0M268.7,644.7h0M277.7,645.8h0M288.2,645.9h0M252.7,650.3h0M260.8,651.6h0M268.7,652.3h0M276.8,653.0h0M284.7,652.1h0M250.8,657.6h0M259.0,658.5h0M266.9,659.0h0M275.3,659.8h0M283.6,659.0h0" stroke="#ffa828" stroke-width="4.200" stroke-linecap="round" fill="none"/>
<path d="M274.4,544.6h0M268.0,549.2h0M255.3,554.0h0M277.0,552.3h0M288.5,551.7h0M268.0,556.3h0M283.8,556.3h0M250.9,560.2h0M260.2,559.8h0M277.0,559.6h0M291.8,559.6h0M268.0,563.3h0M283.8,563.2h0M244.5,565.3h0M253.1,568.2h0M260.7,567.6h0M276.2,566.8h0M291.5,566.6h0M238.8,570.6h0M267.8,570.8h0M283.6,570.1h0M245.9,572.6h0M260.4,574.7h0M276.2,574.0h0M291.3,573.4h0M237.7,577.6h0M253.1,576.0h0M267.8,578.2h0M283.4,577.0h0M245.6,580.2h0M260.4,582.0h0M276.1,581.1h0M290.9,580.0h0M237.9,585.3h0M253.1,583.5h0M267.6,585.7h0M283.0,584.1h0M306.9,581.9h0M245.4,588.5h0M260.4,589.1h0M275.6,587.9h0M290.9,587.5h0M302.0,587.2h0M311.2,587.7h0M238.1,593.4h0M252.9,591.2h0M267.1,593.2h0M282.7,591.2h0M299.3,593.8h0M308.9,593.9h0M245.4,596.3h0M260.2,596.7h0M275.3,594.9h0M290.2,594.5h0M238.4,600.8h0M252.6,599.1h0M266.7,600.8h0M282.5,599.1h0M290.4,601.7h0M299.6,600.8h0M307.2,600.9h0M245.2,604.2h0M260.2,604.0h0M274.4,602.0h0M282.1,605.3h0M238.2,607.7h0M252.6,605.7h0M266.7,608.9h0M289.8,609.0h0M298.1,608.6h0M306.3,607.7h0M245.4,611.6h0M259.9,611.2h0M274.2,610.3h0M281.6,612.5h0M238.7,615.0h0M252.9,613.4h0M270.2,617.4h0M288.5,615.6h0M295.9,615.6h0M304.1,614.9h0M245.6,619.8h0M260.4,618.2h0M278.2,619.3h0M288.0,622.6h0M295.3,622.9h0M303.7,622.2h0M238.8,622.6h0M253.1,620.6h0M265.0,624.2h0M273.9,625.7h0M246.7,626.8h0M256.6,626.5h0M283.0,627.5h0M291.3,629.3h0M301.2,628.8h0M240.1,630.3h0M250.8,632.8h0M260.4,632.3h0M269.5,631.4h0M278.2,632.8h0M286.6,634.9h0M296.8,634.3h0M243.8,637.8h0M255.2,638.9h0M264.6,638.9h0M273.7,638.7h0M282.4,640.6h0M292.5,640.0h0M249.1,643.7h0M259.7,644.4h0M268.7,644.7h0M277.7,645.8h0M288.2,645.9h0M252.7,650.3h0M260.8,651.6h0M268.7,652.3h0M276.8,653.0h0M284.7,652.1h0M250.8,657.6h0M259.0,658.5h0M266.9,659.0h0M275.3,659.8h0M283.6,659.0h0" stroke="#ffd046" stroke-width="2.600" stroke-linecap="round" fill="none"/>
<path d="M354.1,560.9h0M362.3,559.0h0M369.2,564.9h0M351.9,567.7h0M364.9,571.0h0M351.5,575.6h0M334.3,577.9h0M342.9,575.8h0M361.0,579.0h0M328.5,582.9h0M368.5,582.9h0M326.9,589.8h0M336.0,587.9h0M344.2,587.9h0M370.3,590.1h0M361.6,592.7h0M325.6,598.2h0M333.4,597.7h0M342.9,595.6h0M375.3,596.3h0M358.1,599.2h0M366.4,599.9h0M341.5,602.8h0M381.8,600.3h0M389.8,602.8h0M372.1,605.4h0M356.2,606.8h0M379.7,608.2h0M388.0,609.6h0M340.1,610.0h0M359.4,613.2h0M337.9,618.0h0M362.0,620.9h0M349.0,623.0h0M334.3,627.8h0M345.1,629.8h0M353.4,631.3h0M364.9,629.1h0M331.2,635.3h0M341.5,637.5h0M356.7,638.2h0M366.8,637.1h0M327.3,643.3h0M337.5,644.7h0M359.4,645.7h0M369.2,644.7h0M323.7,651.9h0M332.4,653.7h0M363.0,655.5h0M371.7,654.4h0M320.5,659.2h0M328.1,661.6h0M365.6,663.8h0M373.6,662.3h0" stroke="#49330f" stroke-width="5.500" stroke-linecap="round" fill="none"/>
<path d="M354.1,560.9h0M362.3,559.0h0M369.2,564.9h0M351.9,567.7h0M364.9,571.0h0M351.5,575.6h0M334.3,577.9h0M342.9,575.8h0M361.0,579.0h0M328.5,582.9h0M368.5,582.9h0M326.9,589.8h0M336.0,587.9h0M344.2,587.9h0M370.3,590.1h0M361.6,592.7h0M325.6,598.2h0M333.4,597.7h0M342.9,595.6h0M375.3,596.3h0M358.1,599.2h0M366.4,599.9h0M341.5,602.8h0M381.8,600.3h0M389.8,602.8h0M372.1,605.4h0M356.2,606.8h0M379.7,608.2h0M388.0,609.6h0M340.1,610.0h0M359.4,613.2h0M337.9,618.0h0M362.0,620.9h0M349.0,623.0h0M334.3,627.8h0M345.1,629.8h0M353.4,631.3h0M364.9,629.1h0M331.2,635.3h0M341.5,637.5h0M356.7,638.2h0M366.8,637.1h0M327.3,643.3h0M337.5,644.7h0M359.4,645.7h0M369.2,644.7h0M323.7,651.9h0M332.4,653.7h0M363.0,655.5h0M371.7,654.4h0M320.5,659.2h0M328.1,661.6h0M365.6,663.8h0M373.6,662.3h0" stroke="#5a4218" stroke-width="2.500" stroke-linecap="round" fill="none" transform="translate(-.5,-.6)"/>
</g></svg>

</div>
<!-- v scrollbar -->
<div class="abs" style="left:1288px;top:22px;width:16px;height:776px;background:linear-gradient(90deg,#39373b,#464448);box-sizing:border-box"></div>
<div class="abs" style="left:1292px;top:375px;width:8px;height:238px;border-radius:4px;background:#8b898d"></div>
<!-- status bar -->
<div class="abs" style="left:0;top:797px;width:1304px;height:17px;background:#3e3c40;border-top:1px solid #2e2c30;box-sizing:border-box"></div>
<div class="abs" style="left:0;top:798px;width:60px;height:16px;background:#464448;border-radius:0 0 0 4px"></div>
<div class="abs" style="left:60px;top:798px;width:202px;height:16px;background:#59575b"></div>
<span class="olabel" style="left:16px;top:799px">100%</span>
<svg class="abs" style="left:62px;top:800px" width="14" height="12" viewBox="0 0 14 12"><path d="M1.500 3.500h5M1.500 3.500v7h9v-3" fill="none" stroke="#dcdcdc" stroke-width="1.300"/><path d="M5 8c0-3 2-4.500 5-4.500V1.500l3.500 3.200L10 8V6C8 6 6 6.500 5 8z" fill="#dcdcdc"/></svg>
<span class="olabel" style="left:119px;top:799px">Doc: 85.8M/1.35G</span>
<svg class="abs" style="left:252px;top:801px" width="8" height="11" viewBox="0 0 8 11"><path d="M1 .5l6 5-6 5z" fill="#e8e8e8"/></svg>
<div class="abs" style="left:287px;top:801px;width:436px;height:8px;border-radius:4px;background:linear-gradient(#a3a1a5,#7b797d)"></div>
<div class="abs" style="left:1288px;top:798px;width:16px;height:16px;background:#59575b;border-radius:0 0 4px 0"></div><svg class="abs" style="left:1291px;top:800px" width="11" height="11" viewBox="0 0 11 11"><path d="M8 1.500h2M6 4h4M3.500 6.500h6.500M1 9h9" stroke="#2c2a2e" stroke-width="1"/></svg>
</div>
</div><!-- /app -->
<div class="dd abs" style="left:1310px;top:52px;width:123px;height:18px;background:linear-gradient(#626064,#59575b)"></div>
<span class="olabel" style="left:1318px;top:54px;color:#b9b7bb;font-size:11.500px;-webkit-text-stroke:0">Demo</span>
<svg class="abs" style="left:1422px;top:56px" width="6" height="10" viewBox="0 0 6 10"><path d="M0 4l3-3.500L6 4zM0 6l3 3.500L6 6z" fill="#bdbbbf"/></svg>
<div id="dock" class="abs" style="left:1361px;top:80px;width:79px;height:816px;background:#28262a">
<div class="abs" style="left:0;top:0;width:79px;height:12px;background:#39373b"></div>
<svg class="abs" style="left:27px;top:3px" width="9" height="6" viewBox="0 0 9 6"><path d="M4 0v6L0 3zM9 0v6L5 3z" fill="#d2d2d2"/></svg>
<svg class="abs" style="left:67px;top:3px" width="9" height="6" viewBox="0 0 9 6"><path d="M4 0v6L0 3zM9 0v6L5 3z" fill="#d2d2d2"/></svg>
<div class="abs" style="left:0;top:12px;width:38px;height:803px;background:linear-gradient(90deg,#444246,#555357)"></div>
<div class="abs" style="left:41px;top:12px;width:38px;height:803px;background:linear-gradient(90deg,#525054,#565458)"></div>
<div class="abs" style="left:0px;top:12px;width:38px;height:68px;background:#535155;border-bottom:1px solid #353337;box-shadow:0 1px 0 #605e62 inset;box-sizing:border-box"></div>
<div class="abs" style="left:10px;top:15px;width:20px;height:4px;background:repeating-linear-gradient(90deg,#2e2c30 0 1px,transparent 1px 2px)"></div>
<div class="abs" style="left:41px;top:12px;width:38px;height:41px;background:#535155;border-bottom:1px solid #353337;box-shadow:0 1px 0 #605e62 inset;box-sizing:border-box"></div>
<div class="abs" style="left:51px;top:15px;width:20px;height:4px;background:repeating-linear-gradient(90deg,#2e2c30 0 1px,transparent 1px 2px)"></div>
<div class="abs" style="left:41px;top:54px;width:38px;height:68px;background:#535155;border-bottom:1px solid #353337;box-shadow:0 1px 0 #605e62 inset;box-sizing:border-box"></div>
<div class="abs" style="left:51px;top:57px;width:20px;height:4px;background:repeating-linear-gradient(90deg,#2e2c30 0 1px,transparent 1px 2px)"></div>
<div class="abs" style="left:41px;top:123px;width:38px;height:38px;background:#535155;border-bottom:1px solid #353337;box-shadow:0 1px 0 #605e62 inset;box-sizing:border-box"></div>
<div class="abs" style="left:51px;top:126px;width:20px;height:4px;background:repeating-linear-gradient(90deg,#2e2c30 0 1px,transparent 1px 2px)"></div>
<div class="abs" style="left:41px;top:162px;width:38px;height:69px;background:#535155;border-bottom:1px solid #353337;box-shadow:0 1px 0 #605e62 inset;box-sizing:border-box"></div>
<div class="abs" style="left:51px;top:165px;width:20px;height:4px;background:repeating-linear-gradient(90deg,#2e2c30 0 1px,transparent 1px 2px)"></div>
<div class="abs" style="left:41px;top:232px;width:38px;height:68px;background:#535155;border-bottom:1px solid #353337;box-shadow:0 1px 0 #605e62 inset;box-sizing:border-box"></div>
<div class="abs" style="left:51px;top:235px;width:20px;height:4px;background:repeating-linear-gradient(90deg,#2e2c30 0 1px,transparent 1px 2px)"></div>
<svg class="abs" style="left:9px;top:24px" width="24" height="24" viewBox="0 0 24 24"><rect x="3.500" y="12.500" width="6" height="6" stroke="#cfcfd1" fill="none" stroke-width="1.300"/><rect x="6.500" y="15.500" width="6" height="6" fill="#535155" stroke="#cfcfd1" stroke-width="1.300"/><path d="M9.500 8.500A4 4 0 0113.500 4.500H20v1.300h-1.300V18h-1.400V5.800h-1.400V18h-1.400V12.500h-1A4 4 0 019.500 8.500z" fill="#cfcfd1"/></svg>
<span class="abs" style="left:19px;top:52px;font-size:18px;line-height:18px;color:#cfcfd1">A</span>
<svg class="abs" style="left:9px;top:51px" width="24" height="24" viewBox="0 0 24 24"><rect x="3.500" y="12.500" width="6" height="6" stroke="#cfcfd1" fill="none" stroke-width="1.300"/><rect x="6.500" y="15.500" width="6" height="6" fill="#535155" stroke="#cfcfd1" stroke-width="1.300"/></svg>
<svg class="abs" style="left:50px;top:23px" width="24" height="24" viewBox="0 0 24 24"><rect x="4.500" y="4.500" width="4.500" height="4.500" stroke="#cfcfd1" fill="none" stroke-width="1.200"/><rect x="4.500" y="11" width="4.500" height="4.500" stroke="#cfcfd1" fill="none" stroke-width="1.200"/><rect x="4" y="17" width="5.500" height="5" fill="#cfcfd1"/><path d="M13 6h4.500c2.500 2.500 3 7 1 10-1 1.500-2.500 2.500-4.500 3 2.500-2 3.500-5 3-8-.3-1.500-1-2.800-2-3.500L13 7.500z" fill="#cfcfd1"/><path d="M12 4.500h7v1.300h-7z" fill="#cfcfd1"/></svg>
<span class="abs" style="left:53px;top:67px;font-size:17.500px;line-height:18px;color:#cfcfd1">A</span>
<div class="abs" style="left:66px;top:67px;width:1.500px;height:18px;background:#cfcfd1"></div>
<svg class="abs" style="left:48px;top:92px" width="24" height="24" viewBox="0 0 24 24"><path d="M6 8.500A4.500 4.500 0 0110.500 4H18v1.500h-1.500V21h-1.700V5.500h-1.600V21h-1.700V13h-1A4.500 4.500 0 016 8.500z" fill="#cfcfd1"/></svg>
<svg class="abs" style="left:48px;top:134px" width="24" height="24" viewBox="0 0 24 24"><g transform="translate(1.44,1.44) scale(0.88)"><rect x="8" y="13" width="9" height="9" fill="#cfcfd1"/><path d="M11 13l-.8-6c0-2 1.200-3.500 1.800-4.500.6 1 1.800 2.500 1.800 4.500L13 13zM9 13L5.500 8c-.8-1.500-.3-3 .2-4 1 .5 2.300 1.500 2.800 3L10.500 13zM15 13l2.500-6c.7-1.200 2-2 3-2 .2 1 0 2.500-.8 3.700L16 13z" fill="#cfcfd1"/></g></svg>
<svg class="abs" style="left:48px;top:174px" width="24" height="24" viewBox="0 0 24 24"><g transform="translate(1.44,1.44) scale(0.88)"><path d="M12 2.500l8.500 4.200v9.600L12 21l-8.500-4.700V6.700z" fill="#cfcfd1"/><path d="M3.800 6.900L12 11.200l8.200-4.300M12 11.200V20.500" stroke="#535155" stroke-width="1.200" fill="none"/></g></svg>
<svg class="abs" style="left:48px;top:202px" width="24" height="24" viewBox="0 0 24 24"><g transform="translate(1.44,1.44) scale(0.88)"><path d="M8 3l5 2.300v5.400L8 13.500 3 10.700V5.300z" stroke="#cfcfd1" fill="none" stroke-width="1.100"/><path d="M3.200 5.400L8 7.800l4.800-2.400M8 7.800v5.400" stroke="#cfcfd1" fill="none" stroke-width="1"/><rect x="15" y="4" width="5" height="3.500" fill="#cfcfd1"/><rect x="15" y="9" width="5" height="3.500" fill="#cfcfd1"/><rect x="3.500" y="15.500" width="17" height="3" fill="#cfcfd1"/><rect x="3.500" y="19.500" width="17" height="3" fill="#8d8b8f"/><path d="M16 20l2 2.200 2-2.200z" fill="#2a282c"/></g></svg>
<svg class="abs" style="left:48px;top:244px" width="24" height="24" viewBox="0 0 24 24"><g transform="translate(1.44,1.44) scale(0.88)"><path d="M4.500 20.500c0-9 3-14 7.500-14s7.500 5 7.500 14" stroke="#cfcfd1" fill="none" stroke-width="1.300"/><path d="M3 6.500h18" stroke="#cfcfd1" stroke-width="1.200"/><g fill="#535155" stroke="#cfcfd1" stroke-width="1.200"><rect x="1.500" y="4.500" width="4" height="4" fill="#cfcfd1"/><rect x="18.500" y="4.500" width="4" height="4" fill="#cfcfd1"/><rect x="2.500" y="18.500" width="4" height="4"/><rect x="17.500" y="18.500" width="4" height="4"/><rect x="10" y="4.500" width="4" height="4"/></g></g></svg>
<svg class="abs" style="left:48px;top:271px" width="24" height="24" viewBox="0 0 24 24"><g transform="translate(1.44,1.44) scale(0.88)"><circle cx="12" cy="8.500" r="5.800" fill="#dcdcdc"/><circle cx="8" cy="15" r="5.800" fill="#b4b2b6" fill-opacity=".9"/><circle cx="16" cy="15" r="5.800" fill="#98969a" fill-opacity=".9"/><circle cx="12" cy="12.800" r="2.200" fill="#6e6c70"/></g></svg>
</div>
<style>
#lp{left:1076px;top:24px;width:240px;height:874px;background:#535155;box-shadow:0 0 0 1px #2b292d,0 3px 10px rgba(0,0,0,.5);overflow:hidden;font-size:11px;color:#f1f1f1}
#lp .row{position:absolute;left:0;width:225px;box-sizing:border-box;border-bottom:1px solid #3d3b3f}
#lp .eyec{position:absolute;left:0;top:0;bottom:0;width:31px;border-right:1px solid #3d3b3f;box-sizing:border-box}
#lp .nm{position:absolute;white-space:nowrap;line-height:15px;font-size:10.750px;margin-left:.5px;-webkit-text-stroke:.3px rgba(241,241,241,.9)}
#lp .th{position:absolute;width:32px;height:27px;box-sizing:border-box;border:1px solid #0c0c0c;background:#fff}
#lp .vis{position:absolute;left:9px;width:12px;height:12px;box-sizing:border-box;border:1px solid #39373b;background:#5c5a5e}
.dd{position:absolute;box-sizing:border-box;border:1px solid #2f2d31;border-radius:3px;background:linear-gradient(#6c6a6e,#59575b);box-shadow:0 1px 0 rgba(255,255,255,.1)}
.sep{position:absolute;left:0;width:241px;height:2px;border-top:1px solid #3f3d41;border-bottom:1px solid #5d5b5f;box-sizing:border-box}

</style>
<svg width="0" height="0" style="position:absolute"><defs>
<g id="eye"><path d="M.2 4.600C2 1.600 4.200.2 6.500.2s4.500 1.400 6.300 4.400C11 7.600 8.800 9 6.500 9S2 7.600.2 4.600z" fill="#dcdcde"/><circle cx="6.500" cy="4.400" r="2.900" fill="#4a484c"/><circle cx="7.600" cy="3.300" r="1" fill="#e8e8ea"/></g>
<g id="fold"><path d="M0 2.500C0 1.700.6 1 1.400 1h3.400l1.400 1.700h6.400c.8 0 1.400.6 1.400 1.400V11H0z" fill="url(#fg)"/></g>
<linearGradient id="fg" x1="0" y1="0" x2="0" y2="1"><stop offset="0" stop-color="#9c9a9e"/><stop offset="1" stop-color="#ececec"/></linearGradient>
<g id="foldo"><path d="M2 4V2.400C2 1.600 2.600 1 3.400 1h3l1.300 1.600h5.900c.8 0 1.400.6 1.400 1.400v1H4.200z" fill="#a8a6aa"/><path d="M0 5.200h17.500L15 11.500H2.200z" fill="url(#fg)"/></g>
<g id="lock"><path d="M2.200 5V3.400a2.800 2.800 0 015.600 0V5" fill="none" stroke="#d8d8d8" stroke-width="1.300"/><rect x=".6" y="5" width="8.800" height="6.400" rx=".8" fill="none" stroke="#d8d8d8" stroke-width="1.200"/><rect x="4.200" y="6.800" width="1.600" height="2.800" fill="#d8d8d8"/></g>
<pattern id="ck" width="4.660" height="4.660" patternUnits="userSpaceOnUse"><rect width="2.330" height="2.330" fill="#c2c2c4"/><rect x="2.330" y="2.330" width="2.330" height="2.330" fill="#c2c2c4"/></pattern>
</defs></svg>
<div id="lp" class="abs">
<div class="abs" style="left:0;top:0;width:241px;height:13px;background:#403e42;border-bottom:1px solid #2f2d31;box-sizing:border-box"></div>
<svg class="abs" style="left:5px;top:3px" width="8" height="8" viewBox="0 0 8 8"><path d="M1 1l6 6M7 1L1 7" stroke="#d6d6d6" stroke-width="1.300"/></svg>
<svg class="abs" style="left:227px;top:3px" width="10" height="7" viewBox="0 0 10 7"><path d="M4.500 0v7L0 3.500zM10 0v7L5.500 3.500z" fill="#d6d6d6"/></svg>
<div class="abs" style="left:0;top:13px;width:241px;height:17px;background:#39373b"></div>
<div class="abs" style="left:0;top:13px;width:47px;height:18px;background:#535155;border-right:1px solid #2f2d31;box-sizing:border-box"></div>
<span class="nm" style="left:7px;top:14px;font-weight:bold;font-size:10.400px">Layers</span>
<svg class="abs" style="left:221px;top:16px" width="16" height="11" viewBox="0 0 16 11"><path d="M0 3h5L2.500 6z" fill="#d0d0d0"/><path d="M6 1.500h9M6 4h9M6 6.500h9M6 9h9" stroke="#d0d0d0" stroke-width="1.200"/></svg>
<div class="dd" style="left:5px;top:36px;width:89px;height:17px"></div>
<svg class="abs" style="left:11px;top:39px" width="11" height="12" viewBox="0 0 11 12"><circle cx="6.500" cy="4.500" r="3.300" fill="none" stroke="#e0e0e0" stroke-width="1.400"/><path d="M4.200 7L.8 11" stroke="#e0e0e0" stroke-width="1.800"/></svg>
<span class="nm" style="left:25px;top:38px">Kind</span>
<svg class="abs" style="left:83px;top:40px" width="6" height="10" viewBox="0 0 6 10"><path d="M0 4l3-3.500L6 4zM0 6l3 3.500L6 6z" fill="#e6e6e6"/></svg>
<svg class="abs" style="left:104px;top:38px" width="15" height="13" viewBox="0 0 15 13"><rect x=".7" y=".7" width="13.600" height="11.600" fill="none" stroke="#c8c8c8" stroke-width="1.400"/><path d="M2.500 10.500l3-4 2 2.300 1.500-1.300 3 3z" fill="#c8c8c8"/><circle cx="10.500" cy="4" r="1.200" fill="#c8c8c8"/></svg>
<svg class="abs" style="left:130px;top:39px" width="12" height="12" viewBox="0 0 12 12"><circle cx="6" cy="6" r="5.200" fill="none" stroke="#c8c8c8" stroke-width="1.300"/><path d="M9.700 2.300A5.200 5.200 0 002.300 9.700z" fill="#c8c8c8"/></svg>
<span class="abs" style="left:153px;top:34px;font-family:'Liberation Serif',serif;font-weight:bold;font-size:17px;line-height:20px;color:#c8c8c8">T</span>
<svg class="abs" style="left:177px;top:38px" width="13" height="13" viewBox="0 0 13 13"><rect x="2" y="2" width="9" height="9" fill="none" stroke="#c8c8c8" stroke-width="1.300"/><g fill="#535155" stroke="#c8c8c8" stroke-width="1"><rect x=".5" y=".5" width="3" height="3"/><rect x="9.500" y=".5" width="3" height="3"/><rect x=".5" y="9.500" width="3" height="3"/><rect x="9.500" y="9.500" width="3" height="3"/></g></svg>
<svg class="abs" style="left:201px;top:37px" width="13" height="15" viewBox="0 0 13 15"><path d="M4 .7h5.500l3 3V11H4z" fill="#535155" stroke="#c8c8c8" stroke-width="1.200"/><path d="M9 .7v3.500h3.500" fill="none" stroke="#c8c8c8"/><rect x=".5" y="7" width="6.500" height="7" fill="#bdbdbd"/></svg>
<div class="abs" style="left:226px;top:36px;width:9px;height:18px;border:1px solid #2f2d31;box-sizing:border-box;background:linear-gradient(#a09ea2 0,#77757a 48%,#444246 52%,#444246 100%)"></div>
<div class="sep" style="top:57px"></div>
<div class="dd" style="left:5px;top:64px;width:128px;height:17px"></div>
<span class="nm" style="left:11px;top:65px">Pass Through</span>
<svg class="abs" style="left:122px;top:68px" width="6" height="10" viewBox="0 0 6 10"><path d="M0 4l3-3.500L6 4zM0 6l3 3.500L6 6z" fill="#e6e6e6"/></svg>
<span class="nm" style="left:138px;top:65px">Opacity:</span>
<div class="abs" style="left:181px;top:64px;width:54px;height:17px;box-sizing:border-box;border:1px solid #2f2d31;border-radius:2px;background:#38363a"></div>
<div class="abs" style="left:218px;top:65px;width:16px;height:15px;background:linear-gradient(#706e72,#5c5a5e);border-left:1px solid #2f2d31;box-sizing:border-box"></div>
<svg class="abs" style="left:223px;top:71px" width="7" height="4" viewBox="0 0 7 4"><path d="M0 0h7L3.500 4z" fill="#f0f0f0"/></svg>
<span class="nm" style="left:186px;top:66px">100%</span>
<div class="abs" style="left:181px;top:92px;width:54px;height:17px;box-sizing:border-box;border:1px solid #2f2d31;border-radius:2px;background:#38363a"></div>
<div class="abs" style="left:218px;top:93px;width:16px;height:15px;background:linear-gradient(#706e72,#5c5a5e);border-left:1px solid #2f2d31;box-sizing:border-box"></div>
<svg class="abs" style="left:223px;top:99px" width="7" height="4" viewBox="0 0 7 4"><path d="M0 0h7L3.500 4z" fill="#f0f0f0"/></svg>
<span class="nm" style="left:186px;top:94px">100%</span>
<div class="sep" style="top:84px"></div>
<span class="nm" style="left:5px;top:93px">Lock:</span>
<svg class="abs" style="left:38px;top:95px" width="11" height="11" viewBox="0 0 11 11"><rect width="11" height="11" fill="#7c7a7e"/><g fill="#a3a1a5"><rect x="0" y="0" width="3.700" height="3.700"/><rect x="7.300" y="0" width="3.700" height="3.700"/><rect x="3.700" y="3.700" width="3.600" height="3.600"/><rect x="0" y="7.300" width="3.700" height="3.700"/><rect x="7.300" y="7.300" width="3.700" height="3.700"/></g></svg>
<svg class="abs" style="left:58px;top:92px" width="16" height="15" viewBox="0 0 16 15"><path d="M15 .5L7.500 9" stroke="#8f8d91" stroke-width="1.800" stroke-linecap="round"/><path d="M7.800 8.500c-1.500-.8-3 0-3.600 1.500-.5 1.300-1.700 2.300-3.200 2.500 2.500 1.500 6 1 7.300-1.500.5-1 .3-2-.5-2.500z" fill="#8f8d91"/></svg>
<svg class="abs" style="left:81px;top:93px" width="14" height="14" viewBox="0 0 14 14"><path d="M7 1v12M1 7h12" stroke="#8f8d91" stroke-width="1.200"/><path d="M7 0l2.200 2.800H4.800zM7 14l2.200-2.800H4.800zM0 7l2.800-2.200v4.400zM14 7l-2.800-2.200v4.400z" fill="#8f8d91"/></svg>
<svg class="abs" style="left:105px;top:92px" width="11" height="14" viewBox="0 0 11 14"><path d="M2.700 6V4a2.800 2.800 0 015.600 0v2" fill="none" stroke="#e2e2e2" stroke-width="1.500"/><rect x=".5" y="6" width="10" height="7.500" rx="1" fill="#e2e2e2"/><rect x="4.700" y="8" width="1.600" height="3" fill="#535155"/></svg>
<span class="nm" style="left:161px;top:93px">Fill:</span>
<div class="abs" style="left:0;top:115px;width:241px;height:1px;background:#3d3b3f"></div>
<div class="row" style="top:116px;height:34px;background:#535155">
<div class="eyec" style="background:#535155"></div>
<i class="vis" style="top:11px"></i>
<div class="th" style="left:34px;top:3px"><svg class="abs" style="left:0;top:0" width="30" height="25"><rect width="30" height="25" fill="url(#ck)"/></svg>
</div>
<span class="nm" style="left:73px;top:10px">guides</span>
</div>
<div class="row" style="top:150px;height:34px;background:#535155">
<div class="eyec" style="background:#535155"></div>
<i class="vis" style="top:11px"></i>
<div class="th" style="left:34px;top:3px"><svg class="abs" style="left:0;top:0" width="30" height="25"><rect width="30" height="25" fill="url(#ck)"/></svg>
<svg width="30" height="25" viewBox="0 0 30 25" style="position:absolute;left:0;top:0"><path d="M7 3l1 18M7 6l14-3M6 10l3 1M7 14l-2 2M8 17l2 1M20 3l1 3M23 3l1 2" stroke="#9a6a4a" stroke-width="1.500" fill="none"/><path d="M6 8l2 2M7 19l2 2" stroke="#c89a3a" stroke-width="1.500"/></svg>
</div>
<span class="nm" style="left:73px;top:10px">Lampost_Comp</span>
</div>
<div class="row" style="top:184px;height:34px;background:#535155">
<div class="eyec" style="background:#535155"></div>
<svg class="abs" style="left:9px;top:11px" width="13" height="9.500" viewBox="0 0 13 9.500"><use href="#eye"/></svg>
<div class="th" style="left:34px;top:3px"><svg class="abs" style="left:0;top:0" width="30" height="25"><rect width="30" height="25" fill="url(#ck)"/></svg>
</div>
<span class="nm" style="left:73px;top:10px">overall dirt</span>
</div>
<div class="row" style="top:218px;height:23px;background:#535155">
<div class="eyec" style="background:#4b76ad"></div>
<svg class="abs" style="left:9px;top:6px" width="13" height="9.500" viewBox="0 0 13 9.500"><use href="#eye"/></svg>
<svg class="abs" style="left:36px;top:7px" width="7" height="9" viewBox="0 0 7 9"><path d="M0 0l7 4.500L0 9z" fill="#ececec"/></svg>
<svg class="abs" style="left:48px;top:5px" width="15" height="12" viewBox="0 0 15 12"><use href="#fold"/></svg>
<span class="nm" style="left:73px;top:5px">mainclamps</span>
</div>
<div class="row" style="top:241px;height:23px;background:#535155">
<div class="eyec" style="background:#c0742a"></div>
<svg class="abs" style="left:9px;top:6px" width="13" height="9.500" viewBox="0 0 13 9.500"><use href="#eye"/></svg>
<svg class="abs" style="left:36px;top:7px" width="7" height="9" viewBox="0 0 7 9"><path d="M0 0l7 4.500L0 9z" fill="#ececec"/></svg>
<svg class="abs" style="left:48px;top:5px" width="15" height="12" viewBox="0 0 15 12"><use href="#fold"/></svg>
<span class="nm" style="left:73px;top:5px">light support</span>
</div>
<div class="row" style="top:264px;height:34px;background:#535155">
<div class="eyec" style="background:#535155"></div>
<svg class="abs" style="left:9px;top:11px" width="13" height="9.500" viewBox="0 0 13 9.500"><use href="#eye"/></svg>
<div class="th" style="left:34px;top:3px"><svg class="abs" style="left:0;top:0" width="30" height="25"><rect width="30" height="25" fill="url(#ck)"/></svg>
</div>
<span class="nm" style="left:73px;top:10px">clamp</span>
</div>
<div class="row" style="top:298px;height:34px;background:#535155">
<div class="eyec" style="background:#535155"></div>
<i class="vis" style="top:11px"></i>
<div class="th" style="left:34px;top:3px"><svg class="abs" style="left:0;top:0" width="30" height="25"><rect width="30" height="25" fill="url(#ck)"/></svg>
</div>
<svg class="abs" style="left:68px;top:8px" width="9" height="17" viewBox="0 0 9 17"><rect x="1" y="1" width="7" height="6" rx="2" fill="none" stroke="#d0d0d0" stroke-width="1.500"/><rect x="1" y="10" width="7" height="6" rx="2" fill="none" stroke="#d0d0d0" stroke-width="1.500"/><path d="M4.500 4.500v8" stroke="#d0d0d0" stroke-width="1.800"/></svg>
<div class="th" style="left:81px;top:3px;background:#fff"></div>
<span class="nm" style="left:121px;top:10px">outcrop edge in ...</span>
</div>
<div class="row" style="top:332px;height:34px;background:#535155">
<div class="eyec" style="background:#535155"></div>
<i class="vis" style="top:11px"></i>
<div class="th" style="left:34px;top:3px"><svg class="abs" style="left:0;top:0" width="30" height="25"><rect width="30" height="25" fill="url(#ck)"/></svg>
</div>
<span class="nm" style="left:73px;top:10px">back edge</span>
</div>
<div class="row" style="top:366px;height:23px;background:#535155">
<div class="eyec" style="background:#bd9a2a"></div>
<svg class="abs" style="left:9px;top:6px" width="13" height="9.500" viewBox="0 0 13 9.500"><use href="#eye"/></svg>
<svg class="abs" style="left:36px;top:7px" width="7" height="9" viewBox="0 0 7 9"><path d="M0 0l7 4.500L0 9z" fill="#ececec"/></svg>
<svg class="abs" style="left:48px;top:5px" width="15" height="12" viewBox="0 0 15 12"><use href="#fold"/></svg>
<span class="nm" style="left:73px;top:5px">traffic light</span>
</div>
<div class="row" style="top:389px;height:23px;background:#535155">
<div class="eyec" style="background:#4b76ad"></div>
<svg class="abs" style="left:9px;top:6px" width="13" height="9.500" viewBox="0 0 13 9.500"><use href="#eye"/></svg>
<svg class="abs" style="left:36px;top:7px" width="7" height="9" viewBox="0 0 7 9"><path d="M0 0l7 4.500L0 9z" fill="#ececec"/></svg>
<svg class="abs" style="left:48px;top:5px" width="15" height="12" viewBox="0 0 15 12"><use href="#fold"/></svg>
<span class="nm" style="left:73px;top:5px">aluminum strips</span>
</div>
<div class="row" style="top:412px;height:23px;background:#535155">
<div class="eyec" style="background:#6f6d71"></div>
<svg class="abs" style="left:9px;top:6px" width="13" height="9.500" viewBox="0 0 13 9.500"><use href="#eye"/></svg>
<svg class="abs" style="left:36px;top:7px" width="7" height="9" viewBox="0 0 7 9"><path d="M0 0l7 4.500L0 9z" fill="#ececec"/></svg>
<svg class="abs" style="left:48px;top:5px" width="15" height="12" viewBox="0 0 15 12"><use href="#fold"/></svg>
<span class="nm" style="left:73px;top:5px">Pole</span>
</div>
<div class="row" style="top:435px;height:23px;background:#535155">
<div class="eyec" style="background:#bd9a2a"></div>
<svg class="abs" style="left:9px;top:6px" width="13" height="9.500" viewBox="0 0 13 9.500"><use href="#eye"/></svg>
<svg class="abs" style="left:36px;top:7px" width="7" height="9" viewBox="0 0 7 9"><path d="M0 0l7 4.500L0 9z" fill="#ececec"/></svg>
<svg class="abs" style="left:48px;top:5px" width="15" height="12" viewBox="0 0 15 12"><use href="#fold"/></svg>
<span class="nm" style="left:73px;top:5px">crossing sign</span>
</div>
<div class="row" style="top:458px;height:23px;background:#535155">
<div class="eyec" style="background:#5b8f41"></div>
<svg class="abs" style="left:9px;top:6px" width="13" height="9.500" viewBox="0 0 13 9.500"><use href="#eye"/></svg>
<svg class="abs" style="left:35px;top:8px" width="9" height="7" viewBox="0 0 9 7"><path d="M0 0h9L4.500 7z" fill="#ececec"/></svg>
<svg class="abs" style="left:46px;top:5px" width="18" height="12" viewBox="0 0 18 12"><use href="#foldo"/></svg>
<span class="nm" style="left:73px;top:5px">One Way signs</span>
</div>
<div class="row" style="top:481px;height:34px;background:#535155">
<div class="eyec" style="background:#5b8f41"></div>
<svg class="abs" style="left:9px;top:11px" width="13" height="9.500" viewBox="0 0 13 9.500"><use href="#eye"/></svg>
<div class="th" style="left:50px;top:3px"><svg class="abs" style="left:0;top:0" width="30" height="25"><rect width="30" height="25" fill="url(#ck)"/></svg>
</div>
<span class="nm" style="left:89px;top:10px">ONE WAY &lt;</span>
<svg class="abs" style="left:198px;top:11px" width="10" height="12" viewBox="0 0 10 12"><use href="#lock"/></svg>
</div>
<div class="row" style="top:515px;height:34px;background:#535155">
<div class="eyec" style="background:#5b8f41"></div>
<svg class="abs" style="left:9px;top:11px" width="13" height="9.500" viewBox="0 0 13 9.500"><use href="#eye"/></svg>
<div class="th" style="left:50px;top:3px"><svg class="abs" style="left:0;top:0" width="30" height="25"><rect width="30" height="25" fill="url(#ck)"/></svg>
</div>
<span class="nm" style="left:89px;top:10px">ONE WAY &lt; edge</span>
<svg class="abs" style="left:198px;top:11px" width="10" height="12" viewBox="0 0 10 12"><use href="#lock"/></svg>
</div>
<div class="row" style="top:549px;height:34px;background:#535155">
<div class="eyec" style="background:#5b8f41"></div>
<svg class="abs" style="left:9px;top:11px" width="13" height="9.500" viewBox="0 0 13 9.500"><use href="#eye"/></svg>
<div class="th" style="left:50px;top:3px"><svg class="abs" style="left:0;top:0" width="30" height="25"><rect width="30" height="25" fill="url(#ck)"/></svg>
</div>
<span class="nm" style="left:89px;top:10px">ONE WAY &gt;</span>
<svg class="abs" style="left:198px;top:11px" width="10" height="12" viewBox="0 0 10 12"><use href="#lock"/></svg>
</div>
<div class="row" style="top:583px;height:34px;background:#535155">
<div class="eyec" style="background:#5b8f41"></div>
<svg class="abs" style="left:9px;top:11px" width="13" height="9.500" viewBox="0 0 13 9.500"><use href="#eye"/></svg>
<div class="th" style="left:50px;top:3px"><svg class="abs" style="left:0;top:0" width="30" height="25"><rect width="30" height="25" fill="url(#ck)"/></svg>
</div>
<span class="nm" style="left:89px;top:10px">ONE WAY &gt; edge</span>
<svg class="abs" style="left:198px;top:11px" width="10" height="12" viewBox="0 0 10 12"><use href="#lock"/></svg>
</div>
<div class="row" style="top:617px;height:23px;background:#6c7c9d">
<div class="eyec" style="background:#b84145"></div>
<svg class="abs" style="left:9px;top:6px" width="13" height="9.500" viewBox="0 0 13 9.500"><use href="#eye"/></svg>
<svg class="abs" style="left:35px;top:8px" width="9" height="7" viewBox="0 0 9 7"><path d="M0 0h9L4.500 7z" fill="#ececec"/></svg>
<svg class="abs" style="left:46px;top:5px" width="18" height="12" viewBox="0 0 18 12"><use href="#foldo"/></svg>
<span class="nm" style="left:73px;top:5px">3 sign backs</span>
</div>
<div class="row" style="top:640px;height:23px;background:#535155">
<div class="eyec" style="background:#b84145"></div>
<svg class="abs" style="left:9px;top:6px" width="13" height="9.500" viewBox="0 0 13 9.500"><use href="#eye"/></svg>
<svg class="abs" style="left:50px;top:8px" width="9" height="7" viewBox="0 0 9 7"><path d="M0 0h9L4.500 7z" fill="#ececec"/></svg>
<svg class="abs" style="left:61px;top:5px" width="18" height="12" viewBox="0 0 18 12"><use href="#foldo"/></svg>
<span class="nm" style="left:89px;top:5px">top sign</span>
</div>
<div class="row" style="top:663px;height:72px;background:#535155">
<div class="eyec" style="background:#b84145"></div>
<svg class="abs" style="left:9px;top:11px" width="13" height="9.500" viewBox="0 0 13 9.500"><use href="#eye"/></svg>
<div class="th" style="left:66px;top:3px"><svg class="abs" style="left:0;top:0" width="30" height="25"><rect width="30" height="25" fill="url(#ck)"/></svg>
</div>
<span class="nm" style="left:105px;top:10px">inset</span>
<span class="abs" style="left:199px;top:8px;font-family:'Liberation Sans',sans-serif;font-style:italic;font-size:13px;line-height:18px;color:#c4c4c4">fx</span>
<div class="abs" style="left:214px;top:1px;width:11px;height:33px;background:linear-gradient(#adabaf,#5d5b5f)"></div>
<svg class="abs" style="left:216px;top:13px" width="7" height="5" viewBox="0 0 7 5"><path d="M0 5h7L3.500 0z" fill="#2a282c"/></svg>
<svg class="abs" style="left:82px;top:38px" width="14" height="9" viewBox="0 0 14 9"><use href="#eye" transform="scale(.9)"/></svg>
<span class="nm" style="left:99px;top:35px">Effects</span>
<svg class="abs" style="left:99px;top:57px" width="14" height="9" viewBox="0 0 14 9"><use href="#eye" transform="scale(.9)"/></svg>
<span class="nm" style="left:116px;top:54px">Inner Shadow</span>
</div>
<div class="row" style="top:735px;height:72px;background:#535155">
<div class="eyec" style="background:#b84145"></div>
<svg class="abs" style="left:9px;top:11px" width="13" height="9.500" viewBox="0 0 13 9.500"><use href="#eye"/></svg>
<div class="th" style="left:66px;top:3px"><svg class="abs" style="left:0;top:0" width="30" height="25"><rect width="30" height="25" fill="url(#ck)"/></svg>
</div>
<span class="nm" style="left:105px;top:10px">braces</span>
<span class="abs" style="left:199px;top:8px;font-family:'Liberation Sans',sans-serif;font-style:italic;font-size:13px;line-height:18px;color:#c4c4c4">fx</span>
<div class="abs" style="left:214px;top:1px;width:11px;height:33px;background:linear-gradient(#adabaf,#5d5b5f)"></div>
<svg class="abs" style="left:216px;top:13px" width="7" height="5" viewBox="0 0 7 5"><path d="M0 5h7L3.500 0z" fill="#2a282c"/></svg>
<svg class="abs" style="left:82px;top:38px" width="14" height="9" viewBox="0 0 14 9"><use href="#eye" transform="scale(.9)"/></svg>
<span class="nm" style="left:99px;top:35px">Effects</span>
<svg class="abs" style="left:99px;top:57px" width="14" height="9" viewBox="0 0 14 9"><use href="#eye" transform="scale(.9)"/></svg>
<span class="nm" style="left:116px;top:54px">Drop Shadow</span>
</div>
<div class="row" style="top:807px;height:34px;background:#535155">
<div class="eyec" style="background:#b84145"></div>
<svg class="abs" style="left:9px;top:11px" width="13" height="9.500" viewBox="0 0 13 9.500"><use href="#eye"/></svg>
<div class="th" style="left:66px;top:3px"><svg class="abs" style="left:0;top:0" width="30" height="25"><rect width="30" height="25" fill="url(#ck)"/></svg>
</div>
<span class="nm" style="left:105px;top:10px">brace bottom</span>
<svg class="abs" style="left:198px;top:11px" width="10" height="12" viewBox="0 0 10 12"><use href="#lock"/></svg>
</div>
<div class="row" style="top:841px;height:13px;background:#535155">
<div class="eyec" style="background:#b84145"></div>
<div class="th" style="left:82px;top:4px"><svg class="abs" style="left:0;top:0" width="30" height="25"><rect width="30" height="25" fill="url(#ck)"/></svg></div>
</div>
<div class="abs" style="left:225px;top:116px;width:16px;height:737px;background:#4a484c;border-left:1px solid #3d3b3f;box-sizing:border-box"></div>
<div class="abs" style="left:229px;top:119px;width:8px;height:520px;border-radius:4px;background:linear-gradient(90deg,#939195,#7d7b7f)"></div>
<div class="abs" style="left:0;top:853px;width:241px;height:21px;background:#535155;border-top:1px solid #3d3b3f;box-sizing:border-box"></div>
<svg class="abs" style="left:37px;top:860px" width="15" height="8" viewBox="0 0 15 8"><rect x=".8" y=".8" width="7.500" height="6.400" rx="3.200" fill="none" stroke="#bcbcbe" stroke-width="1.500"/><rect x="6.700" y=".8" width="7.500" height="6.400" rx="3.200" fill="none" stroke="#bcbcbe" stroke-width="1.500"/><path d="M5 4h5" stroke="#bcbcbe" stroke-width="1.500"/></svg>
<span class="abs" style="left:65px;top:855px;font-family:'Liberation Sans',sans-serif;font-style:italic;font-size:13px;line-height:18px;color:#bcbcbe">fx</span><svg class="abs" style="left:79px;top:868px" width="4" height="3"><path d="M0 0h4L2 3z" fill="#bcbcbe"/></svg>
<svg class="abs" style="left:92px;top:858px" width="14" height="11" viewBox="0 0 14 11"><rect width="14" height="11" fill="#bcbcbe"/><circle cx="7" cy="5.500" r="3" fill="#535155"/></svg>
<svg class="abs" style="left:119px;top:858px" width="12" height="12" viewBox="0 0 12 12"><circle cx="6" cy="6" r="5.200" fill="none" stroke="#bcbcbe" stroke-width="1.300"/><path d="M9.700 2.300A5.200 5.200 0 002.300 9.700z" fill="#bcbcbe"/></svg><svg class="abs" style="left:133px;top:868px" width="4" height="3"><path d="M0 0h4L2 3z" fill="#bcbcbe"/></svg>
<svg class="abs" style="left:145px;top:858px" width="14" height="11" viewBox="0 0 14 11"><path d="M0 1.500C0 .7.600 0 1.400 0h3.400l1.400 1.700h6.400c.8 0 1.400.6 1.400 1.400V11H0z" fill="#bcbcbe"/></svg>
<svg class="abs" style="left:174px;top:858px" width="11" height="12" viewBox="0 0 11 12"><path d="M0 0h11v11.500H6.500V4H0z" fill="#bcbcbe"/><path d="M1 7.500h4v4z" fill="#bcbcbe"/></svg>
<svg class="abs" style="left:199px;top:856px" width="13" height="14" viewBox="0 0 13 14"><path d="M.5 3h12M4.500 2.500V1h4v1.500" fill="none" stroke="#bcbcbe" stroke-width="1.300"/><path d="M1.800 4.500h9.400L10.300 13.500H2.700z" fill="none" stroke="#bcbcbe" stroke-width="1.200"/><path d="M4.500 6v6M6.500 6v6M8.500 6v6" stroke="#bcbcbe" stroke-width="1"/></svg>
<svg class="abs" style="left:228px;top:861px" width="10" height="10" viewBox="0 0 10 10"><path d="M8.500 1.500h1M6.500 3.500h1M8.500 3.500h1M4.500 5.500h1M6.500 5.500h1M8.500 5.500h1M2.500 7.500h1M4.500 7.500h1M6.500 7.500h1M8.500 7.500h1M.5 9.500h1M2.500 9.500h1M4.500 9.500h1M6.500 9.500h1M8.500 9.500h1" stroke="#2a282c" stroke-width="1"/></svg>
</div>
<div id="tools" class="abs" style="left:0;top:65px;width:38px;height:691px">
<div class="abs" style="left:0;top:0;width:38px;height:13px;background:#3d3b3f;border:1px solid #2a282c;border-radius:4px 4px 0 0;box-sizing:border-box"></div>
<svg class="abs" style="left:5px;top:3px" width="8" height="7" viewBox="0 0 8 7"><path d="M1 .5l6 6M7 .5l-6 6" stroke="#d6d6d6" stroke-width="1.300"/></svg>
<svg class="abs" style="left:24px;top:3px" width="10" height="7" viewBox="0 0 10 7"><path d="M0 0v7l4.500-3.500zM5.500 0v7L10 3.500z" fill="#d6d6d6"/></svg>
<div class="abs" style="left:0;top:12px;width:38px;height:679px;background:#535155;border:1px solid #2a282c;box-sizing:border-box"></div>
<div class="abs" style="left:10px;top:16px;width:19px;height:4px;background:repeating-linear-gradient(90deg,#2e2c30 0 1px,transparent 1px 2px)"></div>
<div class="abs" style="left:3px;top:185px;width:32px;height:1px;background:#3c3a3e"></div>
<div class="abs" style="left:3px;top:395px;width:32px;height:1px;background:#3c3a3e"></div>
<div class="abs" style="left:3px;top:503px;width:32px;height:1px;background:#3c3a3e"></div>
<svg class="abs" style="left:8px;top:30px" width="22" height="22" viewBox="0 0 22 22"><path d="M3 3l9 6-9 5z" fill="#c6c6c8"/><path d="M15 9v10M10 14h10" stroke="#c6c6c8" stroke-width="1.300"/><path d="M15 7.500l2 2.500h-4zM15 20.500l2-2.500h-4zM8.500 14l2.500-2v4zM21.500 14l-2.500-2v4z" fill="#c6c6c8"/></svg>
<svg class="abs" style="left:29px;top:47px" width="4" height="4"><path d="M4 .5v3.500H.5z" fill="#b0b0b2"/></svg>
<svg class="abs" style="left:8px;top:56px" width="22" height="22" viewBox="0 0 22 22"><rect x="4.500" y="4.500" width="13" height="12" stroke="#c6c6c8" fill="none" stroke-width="1.400" stroke-dasharray="3 1.500"/></svg>
<svg class="abs" style="left:29px;top:73px" width="4" height="4"><path d="M4 .5v3.500H.5z" fill="#b0b0b2"/></svg>
<svg class="abs" style="left:8px;top:82px" width="22" height="22" viewBox="0 0 22 22"><ellipse cx="11.500" cy="9" rx="7.500" ry="4.500" transform="rotate(-12 11.500 9)" stroke="#c6c6c8" fill="none" stroke-width="1.400"/><path d="M5.500 12c-1.500 1-1 3 .5 3s2 1.500.5 3.500" stroke="#c6c6c8" fill="none" stroke-width="1.300"/></svg>
<svg class="abs" style="left:29px;top:99px" width="4" height="4"><path d="M4 .5v3.500H.5z" fill="#b0b0b2"/></svg>
<svg class="abs" style="left:8px;top:108px" width="22" height="22" viewBox="0 0 22 22"><path d="M9 8l9 10" stroke="#c6c6c8" stroke-width="2"/><path d="M7 2l1 3.500L11.500 4 9.500 7l3.500 1.500-3.700.7.500 3.800L7.500 10l-3 2.500.8-3.700L1.500 8l3.700-1L3.500 3.500 6.500 5.500z" fill="#c6c6c8"/></svg>
<svg class="abs" style="left:29px;top:125px" width="4" height="4"><path d="M4 .5v3.500H.5z" fill="#b0b0b2"/></svg>
<svg class="abs" style="left:8px;top:135px" width="22" height="22" viewBox="0 0 22 22"><path d="M7.500 3v11.500h11.500M3.500 7h11.500v11.500" stroke="#c6c6c8" fill="none" stroke-width="2"/><path d="M8 14L15 7" stroke="#c6c6c8" stroke-width="1"/></svg>
<svg class="abs" style="left:29px;top:152px" width="4" height="4"><path d="M4 .5v3.500H.5z" fill="#b0b0b2"/></svg>
<svg class="abs" style="left:8px;top:162px" width="22" height="22" viewBox="0 0 22 22"><path d="M3 19l1.500-4L12 7.500l2.500 2.500L7 17.500z" stroke="#c6c6c8" fill="none" stroke-width="1.300"/><path d="M11 6l2-2 1 1 2.500-2.500c1-1 3 1 2 2L16 7l1 1-2 2z" fill="#c6c6c8"/></svg>
<svg class="abs" style="left:29px;top:179px" width="4" height="4"><path d="M4 .5v3.500H.5z" fill="#b0b0b2"/></svg>
<svg class="abs" style="left:8px;top:190px" width="22" height="22" viewBox="0 0 22 22"><rect x="3" y="8" width="17" height="7.500" rx="3.700" transform="rotate(-35 11.500 11.500)" fill="#c6c6c8"/><g fill="#535155"><circle cx="10" cy="11" r=".8"/><circle cx="12.500" cy="9.500" r=".8"/><circle cx="11.500" cy="12.800" r=".8"/><circle cx="14" cy="11.200" r=".8"/></g><path d="M2 9c0-4 3-6 6-6" stroke="#c6c6c8" fill="none" stroke-dasharray="1.500 1.500" stroke-width="1.300"/></svg>
<svg class="abs" style="left:29px;top:207px" width="4" height="4"><path d="M4 .5v3.500H.5z" fill="#b0b0b2"/></svg>
<svg class="abs" style="left:8px;top:216px" width="22" height="22" viewBox="0 0 22 22"><path d="M19.500 2.500L9 13.500" stroke="#c6c6c8" stroke-width="2.200" stroke-linecap="round"/><path d="M9.500 12.500c-2-1-4 0-4.500 2-.5 1.800-1.500 2.800-3 3.200 3 1.800 7 1 8.500-2 .6-1.200.2-2.500-1-3.200z" fill="#c6c6c8"/></svg>
<svg class="abs" style="left:29px;top:233px" width="4" height="4"><path d="M4 .5v3.500H.5z" fill="#b0b0b2"/></svg>
<svg class="abs" style="left:8px;top:242px" width="22" height="22" viewBox="0 0 22 22"><path d="M8.500 3.500a2.500 2.500 0 015 0c0 2-1 3-1 5.500h4.500v3H5v-3h4.500c0-2.500-1-3.500-1-5.500z" fill="#c6c6c8"/><rect x="3" y="14" width="16" height="2.500" fill="#c6c6c8"/><path d="M4 18.500h14" stroke="#c6c6c8" stroke-width="1.200"/></svg>
<svg class="abs" style="left:29px;top:259px" width="4" height="4"><path d="M4 .5v3.500H.5z" fill="#b0b0b2"/></svg>
<svg class="abs" style="left:8px;top:268px" width="22" height="22" viewBox="0 0 22 22"><path d="M19 4L11 13" stroke="#c6c6c8" stroke-width="2" stroke-linecap="round"/><path d="M11.500 12c-1.800-.8-3.500 0-4 1.800-.4 1.500-1.300 2.400-2.500 2.700 2.500 1.500 6 .8 7.300-1.700.5-1 .2-2.200-.8-2.800z" fill="#c6c6c8"/><path d="M4 9c0-3.500 3-5.500 6.500-5" stroke="#c6c6c8" fill="none" stroke-width="1.400"/><path d="M2 8.500l2.200 3 2-3z" fill="#c6c6c8"/><path d="M14 17c2-.5 4-2 4.500-5" stroke="#c6c6c8" fill="none" stroke-dasharray="1.200 1.300" stroke-width="1.200"/></svg>
<svg class="abs" style="left:29px;top:285px" width="4" height="4"><path d="M4 .5v3.500H.5z" fill="#b0b0b2"/></svg>
<svg class="abs" style="left:8px;top:294px" width="22" height="22" viewBox="0 0 22 22"><path d="M3 13l6-7h10l-6 7z" fill="#c6c6c8"/><path d="M3 13.500h10v4H3zM13.500 13.500l5.500-6.500v3.500l-5.500 6.800z" fill="#9d9b9f"/></svg>
<svg class="abs" style="left:29px;top:311px" width="4" height="4"><path d="M4 .5v3.500H.5z" fill="#b0b0b2"/></svg>
<svg class="abs" style="left:8px;top:320px" width="22" height="22" viewBox="0 0 22 22"><defs><linearGradient id="tg" x1="0" x2="1" y1="0" y2="1"><stop offset="0" stop-color="#39373b"/><stop offset="1" stop-color="#e4e4e4"/></linearGradient></defs><rect x="3.500" y="4.500" width="16" height="12" fill="url(#tg)" stroke="#c6c6c8" stroke-width="1.200"/></svg>
<svg class="abs" style="left:29px;top:337px" width="4" height="4"><path d="M4 .5v3.500H.5z" fill="#b0b0b2"/></svg>
<svg class="abs" style="left:8px;top:346px" width="22" height="22" viewBox="0 0 22 22"><ellipse cx="13" cy="8" rx="6.500" ry="4.800" transform="rotate(-20 13 8)" fill="#c6c6c8"/><path d="M8.500 9.500L4 18.500" stroke="#c6c6c8" stroke-width="4.200" stroke-linecap="round"/><path d="M11 12.500c2 .8 4 .3 5.500-1" stroke="#535155" stroke-width="1" fill="none"/></svg>
<svg class="abs" style="left:29px;top:363px" width="4" height="4"><path d="M4 .5v3.500H.5z" fill="#b0b0b2"/></svg>
<svg class="abs" style="left:8px;top:372px" width="22" height="22" viewBox="0 0 22 22"><path d="M3 12c-.5-4 3-8 8-8 4 0 7 2 8.500 5.500 1 2.500.5 5.500-1 7.500H8c-3 0-4.700-2-5-5z" fill="#c6c6c8"/><ellipse cx="8.500" cy="11.500" rx="2.600" ry="2.200" fill="#535155"/><path d="M12 7c1.500 0 3 .8 3.800 2M13 11c1 .3 2 1.200 2.300 2.300" stroke="#535155" stroke-width="1" fill="none"/></svg>
<svg class="abs" style="left:29px;top:389px" width="4" height="4"><path d="M4 .5v3.500H.5z" fill="#b0b0b2"/></svg>
<svg class="abs" style="left:8px;top:401px" width="22" height="22" viewBox="0 0 22 22"><path d="M4 19l2-9 6.500-4.500 5 5L13 17z" fill="#c6c6c8"/><path d="M4.500 18.500l5.500-5.500" stroke="#535155" stroke-width="1.200"/><circle cx="10.500" cy="12.500" r="1.300" fill="#535155"/><path d="M13.500 4.500l2-2 5 5-2 2z" fill="#c6c6c8"/></svg>
<svg class="abs" style="left:29px;top:418px" width="4" height="4"><path d="M4 .5v3.500H.5z" fill="#b0b0b2"/></svg>
<span class="abs" style="left:9px;top:424px;width:20px;text-align:center;font-family:'Liberation Serif',serif;font-size:23px;line-height:26px;color:#c6c6c8">T</span>
<svg class="abs" style="left:29px;top:444px" width="4" height="4"><path d="M4 .5v3.500H.5z" fill="#b0b0b2"/></svg>
<svg class="abs" style="left:8px;top:453px" width="22" height="22" viewBox="0 0 22 22"><path d="M6.500 3v15l3.500-3.500 2.500 5.500 2.500-1.200-2.500-5.300h5z" fill="#c6c6c8"/></svg>
<svg class="abs" style="left:29px;top:470px" width="4" height="4"><path d="M4 .5v3.500H.5z" fill="#b0b0b2"/></svg>
<svg class="abs" style="left:8px;top:479px" width="22" height="22" viewBox="0 0 22 22"><ellipse cx="11" cy="11" rx="8.500" ry="6" fill="#aeacb0" stroke="#c6c6c8" stroke-width="1"/></svg>
<svg class="abs" style="left:29px;top:496px" width="4" height="4"><path d="M4 .5v3.500H.5z" fill="#b0b0b2"/></svg>
<svg class="abs" style="left:8px;top:508px" width="22" height="22" viewBox="0 0 22 22"><g fill="#c6c6c8"><rect x="6" y="5.500" width="2.500" height="9" rx="1.250"/><rect x="9.200" y="3.500" width="2.500" height="11" rx="1.250"/><rect x="12.400" y="4" width="2.500" height="10.500" rx="1.250"/><rect x="15.600" y="6" width="2.400" height="9" rx="1.200"/><path d="M6 11.500h12v3.500c0 2.500-1.300 4.300-2.600 5.500H9c-1.500-1.500-3-3.800-3-6z"/><path d="M6.500 16.500L3.600 12.300c-.8-1.100-2.400-.1-1.700 1.200L5.500 19.500z"/></g></svg>
<svg class="abs" style="left:29px;top:525px" width="4" height="4"><path d="M4 .5v3.500H.5z" fill="#b0b0b2"/></svg>
<div class="abs" style="left:4px;top:532px;width:31px;height:23px;background:#2f2d31;border:1px solid #262428;border-radius:3px;box-sizing:border-box"></div>
<svg class="abs" style="left:8px;top:533px" width="22" height="22" viewBox="0 0 22 22"><circle cx="9.500" cy="9" r="5.200" fill="#8a888c" stroke="#c6c6c8" stroke-width="1.600"/><path d="M13.500 13l5.500 5.500" stroke="#c6c6c8" stroke-width="2.600" stroke-linecap="round"/></svg>
<svg class="abs" style="left:4px;top:559px" width="12" height="11" viewBox="0 0 12 11"><rect x="4.500" y="4" width="7" height="6.500" fill="#f0f0f0" stroke="#1e1e1e"/><rect x=".5" y=".5" width="7" height="6.500" fill="#1e1e1e" stroke="#f0f0f0"/></svg>
<svg class="abs" style="left:22px;top:559px" width="12" height="11" viewBox="0 0 12 11"><path d="M3 3h4c2 0 2.500 1 2.500 3v2" stroke="#c6c6c8" fill="none" stroke-width="1.400"/><path d="M4 .5v5L.5 3zM7 7h5L9.500 10.500z" fill="#c6c6c8"/></svg>
<div class="abs" style="left:15px;top:586px;width:19px;height:19px;background:#fff;border:1px solid #1c1c1c;box-sizing:border-box"></div>
<div class="abs" style="left:5px;top:576px;width:19px;height:19px;background:#ee1c25;border:1px solid #f4f4f4;box-shadow:0 0 0 1px #1c1c1c;box-sizing:border-box"></div>
<svg class="abs" style="left:8px;top:611px" width="22" height="22" viewBox="0 0 22 22"><rect x="2.500" y="4.500" width="17" height="13" stroke="#c6c6c8" fill="none" stroke-width="1.300"/><circle cx="11" cy="11" r="4" stroke="#c6c6c8" fill="none" stroke-dasharray="1.300 1.200" stroke-width="1.200"/></svg>
<svg class="abs" style="left:8px;top:637px" width="22" height="22" viewBox="0 0 22 22"><rect x="7.500" y="4.500" width="12" height="9" fill="#535155" stroke="#c6c6c8" stroke-width="1.300"/><rect x="3.500" y="8.500" width="12" height="9" fill="#8f8d91" stroke="#c6c6c8" stroke-width="1.300"/></svg>
<svg class="abs" style="left:29px;top:654px" width="4" height="4"><path d="M4 .5v3.500H.5z" fill="#b0b0b2"/></svg>
</div>
</body>
</html>
